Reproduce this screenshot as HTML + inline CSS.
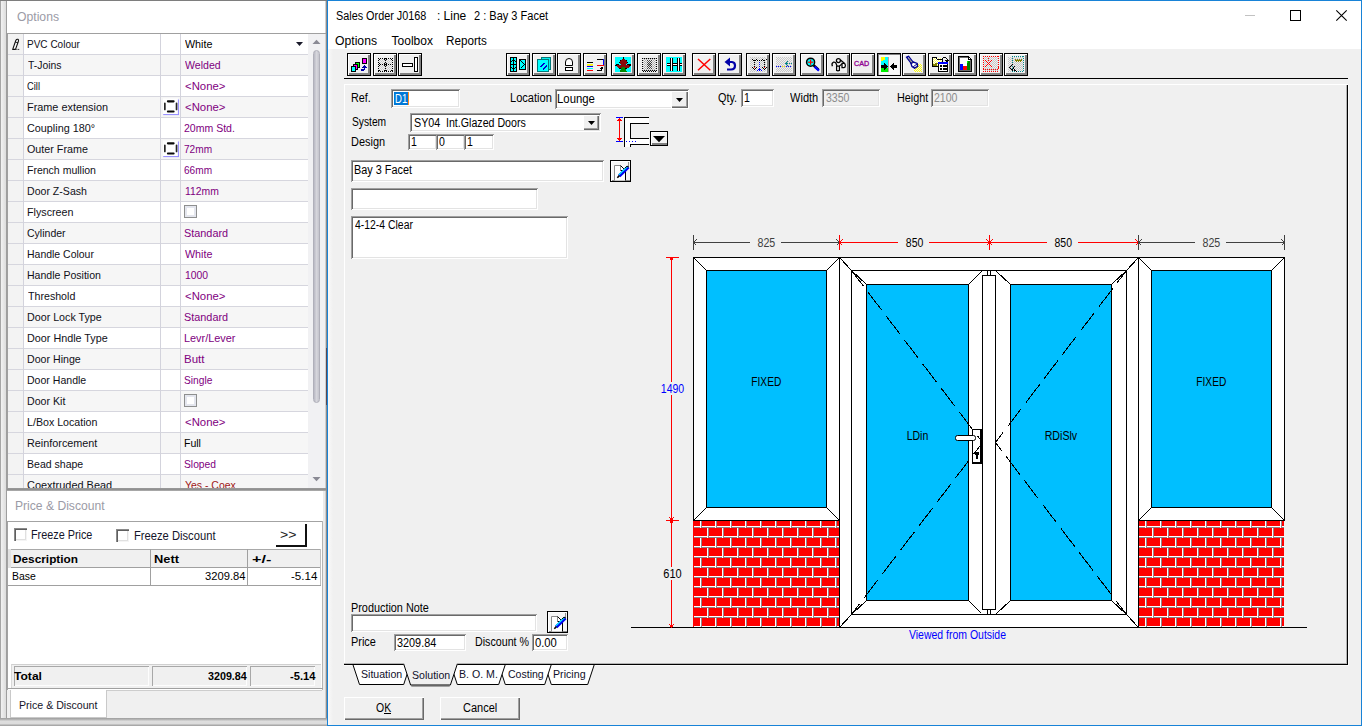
<!DOCTYPE html>
<html lang="en">
<head>
<meta charset="utf-8">
<title>Sales Order J0168 : Line 2 : Bay 3 Facet</title>
<style>
html,body{margin:0;padding:0;}
body{width:1362px;height:726px;position:relative;overflow:hidden;background:#f0f0f0;
 font-family:"Liberation Sans",Arial,sans-serif;}
.b{position:absolute;box-sizing:border-box;display:block;}
.t{position:absolute;white-space:nowrap;transform-origin:0 50%;display:block;}
svg{overflow:visible;}
.ce{shape-rendering:crispEdges;}
</style>
</head>
<body>
<!-- ===== left docked panels ===== -->
<div class="b" style="left:0px;top:0px;width:327px;height:726px;background:#fff;"></div>
<div class="b" style="left:0px;top:0px;width:7px;height:726px;background:linear-gradient(90deg,#a6a6a6 0,#a6a6a6 1px,#f2f2f2 1px,#dcdcdc 6px,#9e9e9e 6px);"></div>
<div class="b" style="left:0px;top:0px;width:327px;height:1px;background:#7e7e7e;"></div>
<div class="b" style="left:325px;top:1px;width:1px;height:725px;background:#cfcfcf;"></div>
<div class="b" style="left:326px;top:1px;width:1px;height:725px;background:#8c8c8c;"></div>
<span class="t" style="left:16.93px;top:8.00px;font-size:13px;line-height:18px;color:#9b9ba6;transform:scaleX(0.9378);">Options</span>
<div class="b" style="left:7px;top:33px;width:319px;height:1px;background:#a0a0a0;"></div>
<div class="b" style="left:7px;top:34px;width:318px;height:454px;overflow:hidden;background:#fff;">
<div class="b" style="left:1px;top:0px;width:300px;height:20px;background:#fff;"></div>
<div class="b" style="left:1px;top:0px;width:15px;height:20px;background:#f3f3f3;"></div>
<div class="b" style="left:1px;top:20px;width:300px;height:1px;background:#d6d6de;"></div>
<span class="t" style="left:19.98px;top:3.00px;font-size:11px;line-height:15px;color:#101018;transform:scaleX(0.9105);">PVC Colour</span>
<span class="t" style="left:177.96px;top:3.00px;font-size:11px;line-height:15px;color:#000;transform:scaleX(0.9751);">White</span>
<div class="b" style="left:1px;top:21px;width:300px;height:20px;background:#f6f6f6;"></div>
<div class="b" style="left:1px;top:21px;width:15px;height:20px;background:#f3f3f3;"></div>
<div class="b" style="left:1px;top:41px;width:300px;height:1px;background:#d6d6de;"></div>
<span class="t" style="left:20.57px;top:24.00px;font-size:11px;line-height:15px;color:#101018;transform:scaleX(0.9450);">T-Joins</span>
<span class="t" style="left:177.96px;top:24.00px;font-size:11px;line-height:15px;color:#800080;transform:scaleX(0.9603);">Welded</span>
<div class="b" style="left:1px;top:42px;width:300px;height:20px;background:#fff;"></div>
<div class="b" style="left:1px;top:42px;width:15px;height:20px;background:#f3f3f3;"></div>
<div class="b" style="left:1px;top:62px;width:300px;height:1px;background:#d6d6de;"></div>
<span class="t" style="left:20.33px;top:45.00px;font-size:11px;line-height:15px;color:#101018;transform:scaleX(0.8498);">Cill</span>
<span class="t" style="left:178.24px;top:45.00px;font-size:11px;line-height:15px;color:#800080;transform:scaleX(1.0346);">&lt;None&gt;</span>
<div class="b" style="left:1px;top:63px;width:300px;height:20px;background:#f6f6f6;"></div>
<div class="b" style="left:1px;top:63px;width:15px;height:20px;background:#f3f3f3;"></div>
<div class="b" style="left:1px;top:83px;width:300px;height:1px;background:#d6d6de;"></div>
<span class="t" style="left:19.91px;top:66.00px;font-size:11px;line-height:15px;color:#101018;transform:scaleX(0.9885);">Frame extension</span>
<span class="t" style="left:178.24px;top:66.00px;font-size:11px;line-height:15px;color:#800080;transform:scaleX(1.0346);">&lt;None&gt;</span>
<div class="b" style="left:1px;top:84px;width:300px;height:20px;background:#fff;"></div>
<div class="b" style="left:1px;top:84px;width:15px;height:20px;background:#f3f3f3;"></div>
<div class="b" style="left:1px;top:104px;width:300px;height:1px;background:#d6d6de;"></div>
<span class="t" style="left:20.26px;top:87.00px;font-size:11px;line-height:15px;color:#101018;transform:scaleX(0.9835);">Coupling 180°</span>
<span class="t" style="left:177.47px;top:87.00px;font-size:11px;line-height:15px;color:#800080;transform:scaleX(0.9567);">20mm Std.</span>
<div class="b" style="left:1px;top:105px;width:300px;height:20px;background:#f6f6f6;"></div>
<div class="b" style="left:1px;top:105px;width:15px;height:20px;background:#f3f3f3;"></div>
<div class="b" style="left:1px;top:125px;width:300px;height:1px;background:#d6d6de;"></div>
<span class="t" style="left:20.30px;top:108.00px;font-size:11px;line-height:15px;color:#101018;transform:scaleX(0.9764);">Outer Frame</span>
<span class="t" style="left:177.48px;top:108.00px;font-size:11px;line-height:15px;color:#800080;transform:scaleX(0.9187);">72mm</span>
<div class="b" style="left:1px;top:126px;width:300px;height:20px;background:#fff;"></div>
<div class="b" style="left:1px;top:126px;width:15px;height:20px;background:#f3f3f3;"></div>
<div class="b" style="left:1px;top:146px;width:300px;height:1px;background:#d6d6de;"></div>
<span class="t" style="left:19.94px;top:129.00px;font-size:11px;line-height:15px;color:#101018;transform:scaleX(0.9556);">French mullion</span>
<span class="t" style="left:177.49px;top:129.00px;font-size:11px;line-height:15px;color:#800080;transform:scaleX(0.9183);">66mm</span>
<div class="b" style="left:1px;top:147px;width:300px;height:20px;background:#f6f6f6;"></div>
<div class="b" style="left:1px;top:147px;width:15px;height:20px;background:#f3f3f3;"></div>
<div class="b" style="left:1px;top:167px;width:300px;height:1px;background:#d6d6de;"></div>
<span class="t" style="left:19.93px;top:150.00px;font-size:11px;line-height:15px;color:#101018;transform:scaleX(0.9614);">Door Z-Sash</span>
<span class="t" style="left:178.01px;top:150.00px;font-size:11px;line-height:15px;color:#800080;transform:scaleX(0.9444);">112mm</span>
<div class="b" style="left:1px;top:168px;width:300px;height:20px;background:#fff;"></div>
<div class="b" style="left:1px;top:168px;width:15px;height:20px;background:#f3f3f3;"></div>
<div class="b" style="left:1px;top:188px;width:300px;height:1px;background:#d6d6de;"></div>
<span class="t" style="left:19.92px;top:171.00px;font-size:11px;line-height:15px;color:#101018;transform:scaleX(0.9746);">Flyscreen</span>
<div class="b" style="left:177px;top:171px;width:13px;height:13px;background:#fff;border:1px solid #8e8f8f;box-shadow:inset 0 0 0 2px #e4e6ee;"></div>
<div class="b" style="left:1px;top:189px;width:300px;height:20px;background:#f6f6f6;"></div>
<div class="b" style="left:1px;top:189px;width:15px;height:20px;background:#f3f3f3;"></div>
<div class="b" style="left:1px;top:209px;width:300px;height:1px;background:#d6d6de;"></div>
<span class="t" style="left:20.27px;top:192.00px;font-size:11px;line-height:15px;color:#101018;transform:scaleX(0.9565);">Cylinder</span>
<span class="t" style="left:176.81px;top:192.00px;font-size:11px;line-height:15px;color:#800080;transform:scaleX(0.9876);">Standard</span>
<div class="b" style="left:1px;top:210px;width:300px;height:20px;background:#fff;"></div>
<div class="b" style="left:1px;top:210px;width:15px;height:20px;background:#f3f3f3;"></div>
<div class="b" style="left:1px;top:230px;width:300px;height:1px;background:#d6d6de;"></div>
<span class="t" style="left:19.94px;top:213.00px;font-size:11px;line-height:15px;color:#101018;transform:scaleX(0.9517);">Handle Colour</span>
<span class="t" style="left:177.96px;top:213.00px;font-size:11px;line-height:15px;color:#800080;transform:scaleX(0.9751);">White</span>
<div class="b" style="left:1px;top:231px;width:300px;height:20px;background:#f6f6f6;"></div>
<div class="b" style="left:1px;top:231px;width:15px;height:20px;background:#f3f3f3;"></div>
<div class="b" style="left:1px;top:251px;width:300px;height:1px;background:#d6d6de;"></div>
<span class="t" style="left:19.93px;top:234.00px;font-size:11px;line-height:15px;color:#101018;transform:scaleX(0.9597);">Handle Position</span>
<span class="t" style="left:178.01px;top:234.00px;font-size:11px;line-height:15px;color:#800080;transform:scaleX(0.9436);">1000</span>
<div class="b" style="left:1px;top:252px;width:300px;height:20px;background:#fff;"></div>
<div class="b" style="left:1px;top:252px;width:15px;height:20px;background:#f3f3f3;"></div>
<div class="b" style="left:1px;top:272px;width:300px;height:1px;background:#d6d6de;"></div>
<span class="t" style="left:20.57px;top:255.00px;font-size:11px;line-height:15px;color:#101018;transform:scaleX(0.9673);">Threshold</span>
<span class="t" style="left:178.24px;top:255.00px;font-size:11px;line-height:15px;color:#800080;transform:scaleX(1.0346);">&lt;None&gt;</span>
<div class="b" style="left:1px;top:273px;width:300px;height:20px;background:#f6f6f6;"></div>
<div class="b" style="left:1px;top:273px;width:15px;height:20px;background:#f3f3f3;"></div>
<div class="b" style="left:1px;top:293px;width:300px;height:1px;background:#d6d6de;"></div>
<span class="t" style="left:19.92px;top:276.00px;font-size:11px;line-height:15px;color:#101018;transform:scaleX(0.9728);">Door Lock Type</span>
<span class="t" style="left:176.81px;top:276.00px;font-size:11px;line-height:15px;color:#800080;transform:scaleX(0.9876);">Standard</span>
<div class="b" style="left:1px;top:294px;width:300px;height:20px;background:#fff;"></div>
<div class="b" style="left:1px;top:294px;width:15px;height:20px;background:#f3f3f3;"></div>
<div class="b" style="left:1px;top:314px;width:300px;height:1px;background:#d6d6de;"></div>
<span class="t" style="left:19.92px;top:297.00px;font-size:11px;line-height:15px;color:#101018;transform:scaleX(0.9807);">Door Hndle Type</span>
<span class="t" style="left:177.11px;top:297.00px;font-size:11px;line-height:15px;color:#800080;transform:scaleX(0.9902);">Levr/Lever</span>
<div class="b" style="left:1px;top:315px;width:300px;height:20px;background:#f6f6f6;"></div>
<div class="b" style="left:1px;top:315px;width:15px;height:20px;background:#f3f3f3;"></div>
<div class="b" style="left:1px;top:335px;width:300px;height:1px;background:#d6d6de;"></div>
<span class="t" style="left:19.93px;top:318.00px;font-size:11px;line-height:15px;color:#101018;transform:scaleX(0.9659);">Door Hinge</span>
<span class="t" style="left:177.06px;top:318.00px;font-size:11px;line-height:15px;color:#800080;transform:scaleX(1.0436);">Butt</span>
<div class="b" style="left:1px;top:336px;width:300px;height:20px;background:#fff;"></div>
<div class="b" style="left:1px;top:336px;width:15px;height:20px;background:#f3f3f3;"></div>
<div class="b" style="left:1px;top:356px;width:300px;height:1px;background:#d6d6de;"></div>
<span class="t" style="left:19.93px;top:339.00px;font-size:11px;line-height:15px;color:#101018;transform:scaleX(0.9591);">Door Handle</span>
<span class="t" style="left:176.84px;top:339.00px;font-size:11px;line-height:15px;color:#800080;transform:scaleX(0.9256);">Single</span>
<div class="b" style="left:1px;top:357px;width:300px;height:20px;background:#f6f6f6;"></div>
<div class="b" style="left:1px;top:357px;width:15px;height:20px;background:#f3f3f3;"></div>
<div class="b" style="left:1px;top:377px;width:300px;height:1px;background:#d6d6de;"></div>
<span class="t" style="left:19.93px;top:360.00px;font-size:11px;line-height:15px;color:#101018;transform:scaleX(0.9648);">Door Kit</span>
<div class="b" style="left:177px;top:360px;width:13px;height:13px;background:#fff;border:1px solid #8e8f8f;box-shadow:inset 0 0 0 2px #e4e6ee;"></div>
<div class="b" style="left:1px;top:378px;width:300px;height:20px;background:#fff;"></div>
<div class="b" style="left:1px;top:378px;width:15px;height:20px;background:#f3f3f3;"></div>
<div class="b" style="left:1px;top:398px;width:300px;height:1px;background:#d6d6de;"></div>
<span class="t" style="left:19.93px;top:381.00px;font-size:11px;line-height:15px;color:#101018;transform:scaleX(0.9681);">L/Box Location</span>
<span class="t" style="left:178.24px;top:381.00px;font-size:11px;line-height:15px;color:#800080;transform:scaleX(1.0346);">&lt;None&gt;</span>
<div class="b" style="left:1px;top:399px;width:300px;height:20px;background:#f6f6f6;"></div>
<div class="b" style="left:1px;top:399px;width:15px;height:20px;background:#f3f3f3;"></div>
<div class="b" style="left:1px;top:419px;width:300px;height:1px;background:#d6d6de;"></div>
<span class="t" style="left:19.91px;top:402.00px;font-size:11px;line-height:15px;color:#101018;transform:scaleX(0.9836);">Reinforcement</span>
<span class="t" style="left:177.14px;top:402.00px;font-size:11px;line-height:15px;color:#000;transform:scaleX(0.9569);">Full</span>
<div class="b" style="left:1px;top:420px;width:300px;height:20px;background:#fff;"></div>
<div class="b" style="left:1px;top:420px;width:15px;height:20px;background:#f3f3f3;"></div>
<div class="b" style="left:1px;top:440px;width:300px;height:1px;background:#d6d6de;"></div>
<span class="t" style="left:19.94px;top:423.00px;font-size:11px;line-height:15px;color:#101018;transform:scaleX(0.9576);">Bead shape</span>
<span class="t" style="left:176.84px;top:423.00px;font-size:11px;line-height:15px;color:#800080;transform:scaleX(0.9348);">Sloped</span>
<div class="b" style="left:1px;top:441px;width:300px;height:20px;background:#f6f6f6;"></div>
<div class="b" style="left:1px;top:441px;width:15px;height:20px;background:#f3f3f3;"></div>
<div class="b" style="left:1px;top:461px;width:300px;height:1px;background:#d6d6de;"></div>
<span class="t" style="left:20.25px;top:444.00px;font-size:11px;line-height:15px;color:#101018;transform:scaleX(0.9946);">Coextruded Bead</span>
<span class="t" style="left:177.77px;top:444.00px;font-size:11px;line-height:15px;color:#a01818;transform:scaleX(0.9500);">Yes - Coex</span>
<div class="b" style="left:0px;top:0px;width:1px;height:454px;background:#d3d3dc;"></div>
<div class="b" style="left:16px;top:0px;width:1px;height:454px;background:#d3d3dc;"></div>
<div class="b" style="left:153px;top:0px;width:1px;height:454px;background:#d3d3dc;"></div>
<div class="b" style="left:173px;top:0px;width:1px;height:454px;background:#d3d3dc;"></div>
<div class="b" style="left:0px;top:0px;width:1px;height:454px;background:#a0a0a0;"></div>
<svg class="b" style="left:4px;top:3px;" width="10" height="14" viewBox="0 0 10 14" ><path d="M1.7 12.4 L4.9 3.3 Q5.6 1.9 6.9 2.3 Q7.9 2.9 7.4 4.2 L4.5 12.4 Z" fill="#fff" stroke="#111" stroke-width="1.1" stroke-linejoin="round"/><path d="M4.3 5.2 L7 5.7" fill="none" stroke="#111" stroke-width=".9"/><rect x="5.4" y="11.9" width="1" height="1" fill="#111"/><rect x="7.2" y="11.9" width="1" height="1" fill="#111"/></svg>
<svg class="b" style="left:156px;top:64px;" width="17" height="18" viewBox="0 0 17 18" ><rect x="0" y="0.5" width="15" height="16" fill="#fff"/><path d="M15.4 1.5 V16.7 M0.2 16.6 H16" stroke="#8f86ff" stroke-width="1" fill="none"/><path d="M4.9 3.35 H10.6 M4.9 13.55 H10.6" stroke="#0a0a0a" stroke-width="2.1" stroke-linecap="round" fill="none"/><path d="M1.85 5.3 V11.4 M13.55 5.3 V11.4" stroke="#262626" stroke-width="1.7" stroke-linecap="round" fill="none"/></svg>
<svg class="b" style="left:156px;top:106px;" width="17" height="18" viewBox="0 0 17 18" ><rect x="0" y="0.5" width="15" height="16" fill="#fff"/><path d="M15.4 1.5 V16.7 M0.2 16.6 H16" stroke="#8f86ff" stroke-width="1" fill="none"/><path d="M4.9 3.35 H10.6 M4.9 13.55 H10.6" stroke="#0a0a0a" stroke-width="2.1" stroke-linecap="round" fill="none"/><path d="M1.85 5.3 V11.4 M13.55 5.3 V11.4" stroke="#262626" stroke-width="1.7" stroke-linecap="round" fill="none"/></svg>
<svg class="b" style="left:289px;top:8px;" width="8" height="5" viewBox="0 0 8 5" ><path d="M0 0 H7 L3.5 4 Z" fill="#1a1a2a"/></svg>
<div class="b" style="left:301px;top:0px;width:17px;height:454px;background:#f1f1f3;"></div>
<svg class="b" style="left:305px;top:5px;" width="9" height="6" viewBox="0 0 9 6" ><path d="M0.5 5 L4.5 0.8 L8.5 5 Z" fill="#8a8a94"/></svg>
<svg class="b" style="left:305px;top:442px;" width="9" height="6" viewBox="0 0 9 6" ><path d="M0.5 1 L8.5 1 L4.5 5.2 Z" fill="#8a8a94"/></svg>
<div class="b" style="left:306px;top:16px;width:7px;height:353px;background:linear-gradient(90deg,#b9b9c3,#d6d6dc 50%,#c4c4cc);border-radius:3.5px;border:1px solid #b0b0ba;"></div>
</div>
<div class="b" style="left:7px;top:488px;width:319px;height:3px;background:linear-gradient(#9a9a9a,#8f8f8f 60%,#b8b8b8);"></div>
<span class="t" style="left:14.51px;top:497.00px;font-size:13px;line-height:18px;color:#9b9ba6;transform:scaleX(0.9322);">Price &amp; Discount</span>
<div class="b" style="left:7px;top:521px;width:316px;height:1px;background:#a3a3a3;"></div>
<div class="b" style="left:7px;top:521px;width:1px;height:170px;background:#a3a3a3;"></div>
<div class="b" style="left:322px;top:521px;width:1px;height:170px;background:#b4b4b4;"></div>
<div class="b" style="left:323px;top:491px;width:2px;height:200px;background:#ececec;"></div>
<div class="b" style="left:7px;top:690px;width:316px;height:1px;background:#b0b0b0;"></div>
<div class="b" style="left:14px;top:528px;width:13px;height:13px;background:#fff;box-shadow:inset 1px 1px 0 #8a8a8a,inset 2px 2px 0 #5f5f5f,inset -1px -1px 0 #f4f4f4,inset -2px -2px 0 #e0e0e0;"></div>
<div class="b" style="left:116px;top:529px;width:13px;height:13px;background:#fff;box-shadow:inset 1px 1px 0 #8a8a8a,inset 2px 2px 0 #5f5f5f,inset -1px -1px 0 #f4f4f4,inset -2px -2px 0 #e0e0e0;"></div>
<span class="t" style="left:31.11px;top:527.00px;font-size:12px;line-height:17px;color:#15152a;transform:scaleX(0.9022);">Freeze Price</span>
<span class="t" style="left:133.58px;top:528.00px;font-size:12px;line-height:17px;color:#15152a;transform:scaleX(0.9327);">Freeze Discount</span>
<div class="b" style="left:276px;top:524px;width:31px;height:23px;background:#fff;border-right:2px solid #111;border-bottom:2px solid #111;"></div>
<span class="t" style="left:279.81px;top:527.00px;font-size:12px;line-height:17px;color:#222;transform:scaleX(1.1671);">&gt;&gt;</span>
<div class="b" style="left:8px;top:549px;width:313px;height:19px;background:#f0f0f0;border-top:1px solid #a8a8a8;border-bottom:1px solid #a0a0a0;"></div>
<div class="b" style="left:8px;top:549px;width:3px;height:19px;background:#e2e2e2;"></div>
<div class="b" style="left:150px;top:549px;width:1px;height:37px;background:#a0a0a0;"></div>
<div class="b" style="left:247px;top:549px;width:1px;height:37px;background:#a0a0a0;"></div>
<div class="b" style="left:320px;top:549px;width:1px;height:37px;background:#c0c0c0;"></div>
<span class="t" style="left:13.22px;top:552.00px;font-size:11px;line-height:15px;color:#000;font-weight:bold;transform:scaleX(1.0744);">Description</span>
<span class="t" style="left:154.15px;top:552.00px;font-size:11px;line-height:15px;color:#000;font-weight:bold;transform:scaleX(1.1692);">Nett</span>
<span class="t" style="left:252.32px;top:552.00px;font-size:11px;line-height:15px;color:#000;font-weight:bold;transform:scaleX(1.4702);">+/-</span>
<div class="b" style="left:8px;top:585px;width:313px;height:1px;background:#a0a0a0;"></div>
<span class="t" style="left:11.64px;top:569.00px;font-size:11px;line-height:15px;color:#000;transform:scaleX(0.9500);">Base</span>
<span class="t" style="left:205.07px;top:569.00px;font-size:11px;line-height:15px;color:#000;transform:scaleX(1.0172);">3209.84</span>
<span class="t" style="left:290.89px;top:569.00px;font-size:11px;line-height:15px;color:#000;transform:scaleX(1.0550);">-5.14</span>
<div class="b" style="left:11px;top:664px;width:310px;height:25px;background:#f0f0f0;border-top:1px solid #d0d0d0;border-left:1px solid #d8d8d8;"></div>
<div class="b" style="left:14px;top:666px;width:135px;height:20px;background:#f0f0f0;box-shadow:inset 1px 1px 0 #a8a8a8,inset -1px -1px 0 #fdfdfd;"></div>
<div class="b" style="left:152px;top:666px;width:95px;height:20px;background:#f0f0f0;box-shadow:inset 1px 1px 0 #a8a8a8,inset -1px -1px 0 #fdfdfd;"></div>
<div class="b" style="left:250px;top:666px;width:65px;height:20px;background:#f0f0f0;box-shadow:inset 1px 1px 0 #a8a8a8,inset -1px -1px 0 #fdfdfd;"></div>
<span class="t" style="left:13.87px;top:669.00px;font-size:11px;line-height:15px;color:#000;font-weight:bold;transform:scaleX(1.0987);">Total</span>
<span class="t" style="left:207.76px;top:669.00px;font-size:11px;line-height:15px;color:#000;font-weight:bold;transform:scaleX(0.9755);">3209.84</span>
<span class="t" style="left:289.56px;top:669.00px;font-size:11px;line-height:15px;color:#000;font-weight:bold;transform:scaleX(1.0169);">-5.14</span>
<div class="b" style="left:7px;top:688px;width:316px;height:1px;background:#a0a0a0;"></div>
<div class="b" style="left:7px;top:690px;width:318px;height:28px;background:#f0f0f0;"></div>
<div class="b" style="left:107px;top:690px;width:215px;height:1px;background:#cdcdcd;"></div>
<div class="b" style="left:10px;top:690px;width:97px;height:28px;background:#fff;border:1px solid #c9c9c9;border-top:none;"></div>
<span class="t" style="left:18.63px;top:698.00px;font-size:11px;line-height:15px;color:#15152a;transform:scaleX(0.9647);">Price &amp; Discount</span>
<div class="b" style="left:0px;top:718px;width:327px;height:8px;background:linear-gradient(#9c9c9c 0,#bdbdbd 2px,#dedede 3px,#dcdcdc 6px,#a8a8a8 7px);"></div>
<!-- ===== main window ===== -->
<div class="b" style="left:327px;top:0px;width:1035px;height:726px;background:#f0f0f0;border:1px solid #1883d7;"></div>
<div class="b" style="left:328px;top:49px;width:5px;height:676px;background:linear-gradient(90deg,#f9f9f9,#f0f0f0);"></div>
<div class="b" style="left:326px;top:348px;width:1px;height:57px;background:#5c4a52;"></div>
<div class="b" style="left:328px;top:1px;width:1033px;height:48px;background:#fff;"></div>
<span class="t" style="left:335.81px;top:8.00px;font-size:12px;line-height:17px;color:#000;transform:scaleX(0.9030);">Sales Order J0168</span>
<span class="t" style="left:436.91px;top:8.00px;font-size:12px;line-height:17px;color:#000;">: Line</span>
<span class="t" style="left:474.45px;top:8.00px;font-size:12px;line-height:17px;color:#000;transform:scaleX(0.9184);">2 : Bay 3 Facet</span>
<span class="t" style="left:335.13px;top:33.00px;font-size:12px;line-height:17px;color:#000;transform:scaleX(1.0160);">Options</span>
<span class="t" style="left:391.54px;top:33.00px;font-size:12px;line-height:17px;color:#000;">Toolbox</span>
<span class="t" style="left:446.34px;top:33.00px;font-size:12px;line-height:17px;color:#000;transform:scaleX(0.9730);">Reports</span>
<div class="b" style="left:1245px;top:15px;width:10px;height:1px;background:#c2c2c2;"></div>
<div class="b" style="left:1290px;top:10px;width:11px;height:11px;border:1px solid #000;"></div>
<svg class="b" style="left:1336px;top:10px;" width="11" height="11" viewBox="0 0 11 11" ><path d="M0.3 0.3 L10.7 10.7 M10.7 0.3 L0.3 10.7" stroke="#000" stroke-width="1.1" fill="none"/></svg>
<div class="b" style="left:344px;top:78px;width:1004px;height:1px;background:#000;"></div>
<div class="b" style="left:344px;top:84px;width:1004px;height:1px;background:#fff;"></div>
<div class="b" style="left:344px;top:84px;width:1px;height:581px;background:#fff;"></div>
<div class="b" style="left:1346px;top:85px;width:1px;height:579px;background:#b4b4b4;"></div>
<div class="b" style="left:1347px;top:85px;width:1px;height:580px;background:#000;"></div>
<div class="b" style="left:1348px;top:85px;width:1px;height:581px;background:#fafafa;"></div>
<div class="b" style="left:344px;top:663px;width:1003px;height:1px;background:#b4b4b4;"></div>
<div class="b" style="left:344px;top:665px;width:1005px;height:1px;background:#fafafa;"></div>
<span class="t" style="left:351.11px;top:89.00px;font-size:12.5px;line-height:18px;color:#000;transform:scaleX(0.8669);">Ref.</span>
<div class="b" style="left:391px;top:89px;width:69px;height:19px;background:#fff;box-shadow:inset 1px 1px 0 #a0a0a0,inset -1px -1px 0 #fff,inset 2px 2px 0 #696969,inset -2px -2px 0 #e3e3e3;"></div>
<div class="b" style="left:394px;top:92px;width:14px;height:13px;background:#0078d7;"></div>
<div class="b" style="left:408px;top:92px;width:1px;height:13px;background:#ff8a1e;"></div>
<span class="t" style="left:394.61px;top:90.00px;font-size:12.5px;line-height:18px;color:#fff;transform:scaleX(0.7666);">D1</span>
<span class="t" style="left:510.09px;top:89.00px;font-size:12.5px;line-height:18px;color:#000;transform:scaleX(0.8869);">Location</span>
<div class="b" style="left:555px;top:89px;width:134px;height:20px;background:#fff;box-shadow:inset 1px 1px 0 #a0a0a0,inset -1px -1px 0 #fff,inset 2px 2px 0 #696969,inset -2px -2px 0 #e3e3e3;"></div>
<span class="t" style="left:557.37px;top:90.00px;font-size:12.5px;line-height:18px;color:#000;transform:scaleX(0.9094);">Lounge</span>
<div class="b" style="left:671px;top:91px;width:17px;height:17px;background:#f0f0f0;box-shadow:inset 1px 1px 0 #fff,inset -1px -1px 0 #696969,inset -2px -2px 0 #a0a0a0;"></div>
<svg class="b" style="left:676px;top:98px;" width="7" height="4" viewBox="0 0 7 4" ><path d="M0 0 H7 L3.5 4 Z" fill="#000"/></svg>
<span class="t" style="left:718.19px;top:89.00px;font-size:12.5px;line-height:18px;color:#000;transform:scaleX(0.8686);">Qty.</span>
<div class="b" style="left:741px;top:89px;width:33px;height:18px;background:#fff;box-shadow:inset 1px 1px 0 #a0a0a0,inset -1px -1px 0 #fff,inset 2px 2px 0 #696969,inset -2px -2px 0 #e3e3e3;"></div>
<span class="t" style="left:744.20px;top:89.00px;font-size:12.5px;line-height:18px;color:#000;transform:scaleX(0.8450);">1</span>
<span class="t" style="left:790.26px;top:89.00px;font-size:12.5px;line-height:18px;color:#000;transform:scaleX(0.8842);">Width</span>
<div class="b" style="left:822px;top:89px;width:58px;height:18px;background:#f0f0f0;box-shadow:inset 1px 1px 0 #a0a0a0,inset -1px -1px 0 #fff,inset 2px 2px 0 #696969,inset -2px -2px 0 #e3e3e3;"></div>
<span class="t" style="left:825.60px;top:89.00px;font-size:12.5px;line-height:18px;color:#8c8c8c;transform:scaleX(0.8450);">3350</span>
<span class="t" style="left:896.71px;top:89.00px;font-size:12.5px;line-height:18px;color:#000;transform:scaleX(0.8680);">Height</span>
<div class="b" style="left:931px;top:89px;width:58px;height:18px;background:#f0f0f0;box-shadow:inset 1px 1px 0 #a0a0a0,inset -1px -1px 0 #fff,inset 2px 2px 0 #696969,inset -2px -2px 0 #e3e3e3;"></div>
<span class="t" style="left:934.47px;top:89.00px;font-size:12.5px;line-height:18px;color:#8c8c8c;transform:scaleX(0.8450);">2100</span>
<span class="t" style="left:351.54px;top:113.00px;font-size:12.5px;line-height:18px;color:#000;transform:scaleX(0.8189);">System</span>
<div class="b" style="left:410px;top:113px;width:191px;height:19px;background:#fff;box-shadow:inset 1px 1px 0 #a0a0a0,inset -1px -1px 0 #fff,inset 2px 2px 0 #696969,inset -2px -2px 0 #e3e3e3;"></div>
<span class="t" style="left:414.02px;top:114.00px;font-size:12.5px;line-height:18px;color:#000;transform:scaleX(0.8600);">SY04</span>
<span class="t" style="left:445.82px;top:114.00px;font-size:12.5px;line-height:18px;color:#000;transform:scaleX(0.8504);">Int.Glazed Doors</span>
<div class="b" style="left:583px;top:115px;width:16px;height:15px;background:#f0f0f0;box-shadow:inset 1px 1px 0 #fff,inset -1px -1px 0 #696969,inset -2px -2px 0 #a0a0a0;"></div>
<svg class="b" style="left:588px;top:121px;" width="7" height="4" viewBox="0 0 7 4" ><path d="M0 0 H7 L3.5 4 Z" fill="#000"/></svg>
<span class="t" style="left:351.10px;top:133.00px;font-size:12.5px;line-height:18px;color:#000;transform:scaleX(0.8763);">Design</span>
<div class="b" style="left:408px;top:134px;width:29px;height:16px;background:#fff;box-shadow:inset 1px 1px 0 #a0a0a0,inset -1px -1px 0 #fff,inset 2px 2px 0 #696969,inset -2px -2px 0 #e3e3e3;"></div>
<span class="t" style="left:410.90px;top:133.00px;font-size:12.5px;line-height:18px;color:#000;transform:scaleX(0.8450);">1</span>
<div class="b" style="left:436px;top:134px;width:29px;height:16px;background:#fff;box-shadow:inset 1px 1px 0 #a0a0a0,inset -1px -1px 0 #fff,inset 2px 2px 0 #696969,inset -2px -2px 0 #e3e3e3;"></div>
<span class="t" style="left:439.29px;top:133.00px;font-size:12.5px;line-height:18px;color:#000;transform:scaleX(0.8450);">0</span>
<div class="b" style="left:464px;top:134px;width:30px;height:16px;background:#fff;box-shadow:inset 1px 1px 0 #a0a0a0,inset -1px -1px 0 #fff,inset 2px 2px 0 #696969,inset -2px -2px 0 #e3e3e3;"></div>
<span class="t" style="left:466.90px;top:133.00px;font-size:12.5px;line-height:18px;color:#000;transform:scaleX(0.8450);">1</span>
<svg class="b" style="left:615px;top:116px;" width="55" height="33" viewBox="0 0 55 33" ><g class="ce"><rect x="10" y="2" width="24" height="29" fill="#fff"/><rect x="16" y="8" width="18" height="14" fill="#f0f0f0"/><rect x="16" y="29" width="18" height="2" fill="#f0f0f0"/><rect x="1" y="1" width="7" height="1" fill="#00f"/><rect x="1" y="25" width="7" height="1" fill="#00f"/><rect x="4" y="2" width="1" height="23" fill="#f00"/><rect x="3" y="3" width="3" height="1" fill="#f00"/><rect x="2" y="4" width="5" height="1" fill="#f00"/><rect x="3" y="23" width="3" height="1" fill="#f00"/><rect x="2" y="22" width="5" height="1" fill="#f00"/><rect x="9" y="1" width="1" height="30" fill="#000"/><rect x="9" y="1" width="25" height="1" fill="#000"/><rect x="15" y="7" width="1" height="16" fill="#000"/><rect x="15" y="7" width="19" height="1" fill="#000"/><rect x="15" y="22" width="19" height="1" fill="#000"/><rect x="15" y="28" width="19" height="1" fill="#000"/><rect x="15" y="28" width="1" height="3" fill="#000"/><rect x="11" y="25" width="1" height="1" fill="#00f"/><rect x="14" y="25" width="1" height="1" fill="#00f"/><rect x="17" y="25" width="1" height="1" fill="#00f"/><rect x="20" y="25" width="1" height="1" fill="#00f"/></g></svg>
<div class="b" style="left:650px;top:131px;width:18px;height:15px;background:#f4f4f4;border:1px solid #000;box-shadow:inset 1px 1px 0 #fff,inset 0 -2px 0 #808080;"></div>
<svg class="b" style="left:653px;top:136px;" width="12" height="7" viewBox="0 0 12 7" ><path d="M0 0 H12 L6 6.2 Z" fill="#000"/></svg>
<div class="b" style="left:351px;top:160px;width:253px;height:22px;background:#fff;box-shadow:inset 1px 1px 0 #a0a0a0,inset -1px -1px 0 #fff,inset 2px 2px 0 #696969,inset -2px -2px 0 #e3e3e3;"></div>
<span class="t" style="left:353.81px;top:161.00px;font-size:12.5px;line-height:18px;color:#000;transform:scaleX(0.8691);">Bay 3 Facet</span>
<div class="b" style="left:351px;top:188px;width:187px;height:22px;background:#fff;box-shadow:inset 1px 1px 0 #a0a0a0,inset -1px -1px 0 #fff,inset 2px 2px 0 #696969,inset -2px -2px 0 #e3e3e3;"></div>
<div class="b" style="left:351px;top:216px;width:217px;height:43px;background:#fff;box-shadow:inset 1px 1px 0 #a0a0a0,inset -1px -1px 0 #fff,inset 2px 2px 0 #696969,inset -2px -2px 0 #e3e3e3;"></div>
<span class="t" style="left:355.27px;top:216.00px;font-size:12.5px;line-height:18px;color:#000;transform:scaleX(0.8333);">4-12-4 Clear</span>
<div class="b" style="left:610px;top:160px;width:21px;height:22px;background:#f6f6f6;border:1px solid #000;box-shadow:inset 1px 1px 0 #fff,inset 0 -1px 0 #8a8a8a;"></div>
<svg class="b" style="left:610px;top:160px;" width="21" height="22" viewBox="0 0 21 22" ><path d="M4.5 20.5 V5.5 H10.5 L15.5 10.5 V20.5 Z" fill="#fff" stroke="none"/><path d="M4.5 20.5 V5.5 H10.5 V10.2" fill="none" stroke="#8a8a8a" stroke-width="1"/><path d="M10.5 5.5 L15.5 10.5 V20.5 M10.5 10.5 H15.5" fill="none" stroke="#000" stroke-width="1"/><path d="M18.5 2 V6" stroke="#909090" stroke-width="1" fill="none"/><path d="M9.2 16 L18.3 7" stroke="#0000f0" stroke-width="3.2" fill="none"/><path d="M8.9 14.9 L17.4 6.5" stroke="#00f0ff" stroke-width="1.3" fill="none"/><path d="M7.3 17.7 L9.4 15.6" stroke="#000" stroke-width="1.6" fill="none"/><path d="M14.8 8.2 L17 6.2 L19 7" stroke="#000" stroke-width="1" fill="none"/></svg>
<div class="b" style="left:547px;top:611px;width:21px;height:22px;background:#f6f6f6;border:1px solid #000;box-shadow:inset 1px 1px 0 #fff,inset 0 -1px 0 #8a8a8a;"></div>
<svg class="b" style="left:547px;top:611px;" width="21" height="22" viewBox="0 0 21 22" ><path d="M4.5 20.5 V5.5 H10.5 L15.5 10.5 V20.5 Z" fill="#fff" stroke="none"/><path d="M4.5 20.5 V5.5 H10.5 V10.2" fill="none" stroke="#8a8a8a" stroke-width="1"/><path d="M10.5 5.5 L15.5 10.5 V20.5 M10.5 10.5 H15.5" fill="none" stroke="#000" stroke-width="1"/><path d="M18.5 2 V6" stroke="#909090" stroke-width="1" fill="none"/><path d="M9.2 16 L18.3 7" stroke="#0000f0" stroke-width="3.2" fill="none"/><path d="M8.9 14.9 L17.4 6.5" stroke="#00f0ff" stroke-width="1.3" fill="none"/><path d="M7.3 17.7 L9.4 15.6" stroke="#000" stroke-width="1.6" fill="none"/><path d="M14.8 8.2 L17 6.2 L19 7" stroke="#000" stroke-width="1" fill="none"/></svg>
<span class="t" style="left:350.61px;top:599.00px;font-size:12.5px;line-height:18px;color:#000;transform:scaleX(0.8687);">Production Note</span>
<div class="b" style="left:351px;top:614px;width:186px;height:18px;background:#fff;box-shadow:inset 1px 1px 0 #a0a0a0,inset -1px -1px 0 #fff,inset 2px 2px 0 #696969,inset -2px -2px 0 #e3e3e3;"></div>
<span class="t" style="left:350.60px;top:633.00px;font-size:12.5px;line-height:18px;color:#000;transform:scaleX(0.8736);">Price</span>
<div class="b" style="left:394px;top:634px;width:72px;height:17px;background:#fff;box-shadow:inset 1px 1px 0 #a0a0a0,inset -1px -1px 0 #fff,inset 2px 2px 0 #696969,inset -2px -2px 0 #e3e3e3;"></div>
<span class="t" style="left:396.89px;top:634.00px;font-size:12.5px;line-height:18px;color:#000;transform:scaleX(0.8681);">3209.84</span>
<span class="t" style="left:474.62px;top:633.00px;font-size:12.5px;line-height:18px;color:#000;transform:scaleX(0.8551);">Discount %</span>
<div class="b" style="left:532px;top:634px;width:36px;height:17px;background:#fff;box-shadow:inset 1px 1px 0 #a0a0a0,inset -1px -1px 0 #fff,inset 2px 2px 0 #696969,inset -2px -2px 0 #e3e3e3;"></div>
<span class="t" style="left:535.06px;top:634.00px;font-size:12.5px;line-height:18px;color:#000;transform:scaleX(0.8989);">0.00</span>
<svg class="b" style="left:0;top:0;" width="1362" height="726" viewBox="0 0 1362 726"><path d="M544.7 664.5 L551.3 684.5 L587.7 684.5 L594.3 664.5" fill="#fff" stroke="#000" stroke-width="1"/><path d="M498.7 664.5 L505.3 684.5 L544.7 684.5 L551.3 664.5" fill="#fff" stroke="#000" stroke-width="1"/><path d="M450.7 664.5 L457.3 684.5 L498.7 684.5 L505.3 664.5" fill="#fff" stroke="#000" stroke-width="1"/><path d="M352.9 664.5 L359.5 684.5 L403.7 684.5 L410.3 664.5" fill="#fff" stroke="#000" stroke-width="1"/><path d="M344 664.5 H403.7 M457.3 664.5 H1348" stroke="#000" stroke-width="1" fill="none"/><rect x="404.2" y="662.5" width="52.6" height="3" fill="#f0f0f0"/><path d="M403.7 664 L410.6 685 L450.4 685 L457.3 664" fill="#f0f0f0" stroke="#000" stroke-width="1"/><path d="M411.3 686 L449.7 686" stroke="#555" stroke-width="1"/></svg>
<span class="t" style="left:360.82px;top:667.00px;font-size:11px;line-height:15px;color:#10102a;transform:scaleX(0.9615);">Situation</span>
<span class="t" style="left:411.82px;top:668.00px;font-size:11px;line-height:15px;color:#10102a;transform:scaleX(0.9597);">Solution</span>
<span class="t" style="left:459.43px;top:667.00px;font-size:11px;line-height:15px;color:#10102a;transform:scaleX(0.9627);">B. O. M.</span>
<span class="t" style="left:507.97px;top:667.00px;font-size:11px;line-height:15px;color:#10102a;transform:scaleX(0.9574);">Costing</span>
<span class="t" style="left:553.13px;top:667.00px;font-size:11px;line-height:15px;color:#10102a;transform:scaleX(0.9681);">Pricing</span>
<div class="b" style="left:344px;top:697px;width:80px;height:23px;background:#f0f0f0;box-shadow:inset 1px 1px 0 #fff,inset -1px -1px 0 #696969,inset -2px -2px 0 #a0a0a0;"></div>
<span class="t" style="left:376.11px;top:699.00px;font-size:12.5px;line-height:18px;color:#000;transform:scaleX(0.8363);">OK</span>
<div class="b" style="left:384px;top:713px;width:7px;height:1px;background:#000;"></div>
<div class="b" style="left:440px;top:697px;width:80px;height:23px;background:#f0f0f0;box-shadow:inset 1px 1px 0 #fff,inset -1px -1px 0 #696969,inset -2px -2px 0 #a0a0a0;"></div>
<span class="t" style="left:463.05px;top:699.00px;font-size:12.5px;line-height:18px;color:#000;transform:scaleX(0.8809);">Cancel</span>
<!-- ===== toolbar ===== -->
<div class="b" style="left:347px;top:53px;width:24px;height:23px;background:#f0f0f0;border:1px solid #000;box-shadow:inset 1px 1px 0 #fff,inset -1px -1px 0 #808080,inset -2px -2px 0 #808080;"></div>
<svg class="b" style="left:347px;top:53px;" width="24" height="23" viewBox="0 0 24 23" ><g class="ce"><rect x="15.5" y="5.5" width="4" height="5" fill="#f0f" stroke="#000" stroke-width="1"/><rect x="8.5" y="9.5" width="4" height="5" fill="#0f0" stroke="#000" stroke-width="1"/><rect x="6.5" y="11.5" width="4" height="5" fill="#f0f" stroke="#000" stroke-width="1"/><rect x="4.5" y="13.5" width="4" height="5" fill="#0ff" stroke="#000" stroke-width="1"/><rect x="14" y="16" width="4" height="1" fill="#0000a8"/><rect x="14" y="17" width="3" height="1" fill="#0000a8"/><rect x="17" y="12" width="1" height="5" fill="#0000a8"/><rect x="16" y="13" width="3" height="1" fill="#0000a8"/><rect x="15" y="14" width="5" height="1" fill="#0000a8"/></g></svg>
<div class="b" style="left:373px;top:53px;width:24px;height:23px;background:#f0f0f0;border:1px solid #000;box-shadow:inset 1px 1px 0 #fff,inset -1px -1px 0 #808080,inset -2px -2px 0 #808080;"></div>
<svg class="b" style="left:373px;top:53px;" width="24" height="23" viewBox="0 0 24 23" ><g class="ce"><rect x="6" y="6" width="1" height="1" fill="#cfcfcf"/><rect x="8" y="6" width="1" height="1" fill="#cfcfcf"/><rect x="10" y="6" width="1" height="1" fill="#cfcfcf"/><rect x="12" y="6" width="1" height="1" fill="#cfcfcf"/><rect x="14" y="6" width="1" height="1" fill="#cfcfcf"/><rect x="16" y="6" width="1" height="1" fill="#cfcfcf"/><rect x="18" y="6" width="1" height="1" fill="#cfcfcf"/><rect x="7" y="7" width="1" height="1" fill="#cfcfcf"/><rect x="9" y="7" width="1" height="1" fill="#cfcfcf"/><rect x="11" y="7" width="1" height="1" fill="#cfcfcf"/><rect x="13" y="7" width="1" height="1" fill="#cfcfcf"/><rect x="15" y="7" width="1" height="1" fill="#cfcfcf"/><rect x="17" y="7" width="1" height="1" fill="#cfcfcf"/><rect x="6" y="8" width="1" height="1" fill="#cfcfcf"/><rect x="8" y="8" width="1" height="1" fill="#cfcfcf"/><rect x="10" y="8" width="1" height="1" fill="#cfcfcf"/><rect x="12" y="8" width="1" height="1" fill="#cfcfcf"/><rect x="14" y="8" width="1" height="1" fill="#cfcfcf"/><rect x="16" y="8" width="1" height="1" fill="#cfcfcf"/><rect x="18" y="8" width="1" height="1" fill="#cfcfcf"/><rect x="7" y="9" width="1" height="1" fill="#cfcfcf"/><rect x="9" y="9" width="1" height="1" fill="#cfcfcf"/><rect x="11" y="9" width="1" height="1" fill="#cfcfcf"/><rect x="13" y="9" width="1" height="1" fill="#cfcfcf"/><rect x="15" y="9" width="1" height="1" fill="#cfcfcf"/><rect x="17" y="9" width="1" height="1" fill="#cfcfcf"/><rect x="6" y="10" width="1" height="1" fill="#cfcfcf"/><rect x="8" y="10" width="1" height="1" fill="#cfcfcf"/><rect x="10" y="10" width="1" height="1" fill="#cfcfcf"/><rect x="12" y="10" width="1" height="1" fill="#cfcfcf"/><rect x="14" y="10" width="1" height="1" fill="#cfcfcf"/><rect x="16" y="10" width="1" height="1" fill="#cfcfcf"/><rect x="18" y="10" width="1" height="1" fill="#cfcfcf"/><rect x="7" y="11" width="1" height="1" fill="#cfcfcf"/><rect x="9" y="11" width="1" height="1" fill="#cfcfcf"/><rect x="11" y="11" width="1" height="1" fill="#cfcfcf"/><rect x="13" y="11" width="1" height="1" fill="#cfcfcf"/><rect x="15" y="11" width="1" height="1" fill="#cfcfcf"/><rect x="17" y="11" width="1" height="1" fill="#cfcfcf"/><rect x="6" y="12" width="1" height="1" fill="#cfcfcf"/><rect x="8" y="12" width="1" height="1" fill="#cfcfcf"/><rect x="10" y="12" width="1" height="1" fill="#cfcfcf"/><rect x="12" y="12" width="1" height="1" fill="#cfcfcf"/><rect x="14" y="12" width="1" height="1" fill="#cfcfcf"/><rect x="16" y="12" width="1" height="1" fill="#cfcfcf"/><rect x="18" y="12" width="1" height="1" fill="#cfcfcf"/><rect x="7" y="13" width="1" height="1" fill="#cfcfcf"/><rect x="9" y="13" width="1" height="1" fill="#cfcfcf"/><rect x="11" y="13" width="1" height="1" fill="#cfcfcf"/><rect x="13" y="13" width="1" height="1" fill="#cfcfcf"/><rect x="15" y="13" width="1" height="1" fill="#cfcfcf"/><rect x="17" y="13" width="1" height="1" fill="#cfcfcf"/><rect x="6" y="14" width="1" height="1" fill="#cfcfcf"/><rect x="8" y="14" width="1" height="1" fill="#cfcfcf"/><rect x="10" y="14" width="1" height="1" fill="#cfcfcf"/><rect x="12" y="14" width="1" height="1" fill="#cfcfcf"/><rect x="14" y="14" width="1" height="1" fill="#cfcfcf"/><rect x="16" y="14" width="1" height="1" fill="#cfcfcf"/><rect x="18" y="14" width="1" height="1" fill="#cfcfcf"/><rect x="7" y="15" width="1" height="1" fill="#cfcfcf"/><rect x="9" y="15" width="1" height="1" fill="#cfcfcf"/><rect x="11" y="15" width="1" height="1" fill="#cfcfcf"/><rect x="13" y="15" width="1" height="1" fill="#cfcfcf"/><rect x="15" y="15" width="1" height="1" fill="#cfcfcf"/><rect x="17" y="15" width="1" height="1" fill="#cfcfcf"/><rect x="6" y="16" width="1" height="1" fill="#cfcfcf"/><rect x="8" y="16" width="1" height="1" fill="#cfcfcf"/><rect x="10" y="16" width="1" height="1" fill="#cfcfcf"/><rect x="12" y="16" width="1" height="1" fill="#cfcfcf"/><rect x="14" y="16" width="1" height="1" fill="#cfcfcf"/><rect x="16" y="16" width="1" height="1" fill="#cfcfcf"/><rect x="18" y="16" width="1" height="1" fill="#cfcfcf"/><rect x="7" y="17" width="1" height="1" fill="#cfcfcf"/><rect x="9" y="17" width="1" height="1" fill="#cfcfcf"/><rect x="11" y="17" width="1" height="1" fill="#cfcfcf"/><rect x="13" y="17" width="1" height="1" fill="#cfcfcf"/><rect x="15" y="17" width="1" height="1" fill="#cfcfcf"/><rect x="17" y="17" width="1" height="1" fill="#cfcfcf"/><rect x="5" y="5" width="1" height="1" fill="#000"/><rect x="5" y="18" width="1" height="1" fill="#000"/><rect x="7" y="5" width="1" height="1" fill="#000"/><rect x="7" y="18" width="1" height="1" fill="#000"/><rect x="9" y="5" width="1" height="1" fill="#000"/><rect x="9" y="18" width="1" height="1" fill="#000"/><rect x="11" y="5" width="1" height="1" fill="#000"/><rect x="11" y="18" width="1" height="1" fill="#000"/><rect x="13" y="5" width="1" height="1" fill="#000"/><rect x="13" y="18" width="1" height="1" fill="#000"/><rect x="15" y="5" width="1" height="1" fill="#000"/><rect x="15" y="18" width="1" height="1" fill="#000"/><rect x="17" y="5" width="1" height="1" fill="#000"/><rect x="17" y="18" width="1" height="1" fill="#000"/><rect x="19" y="5" width="1" height="1" fill="#000"/><rect x="19" y="18" width="1" height="1" fill="#000"/><rect x="5" y="5" width="1" height="1" fill="#000"/><rect x="19" y="5" width="1" height="1" fill="#000"/><rect x="5" y="7" width="1" height="1" fill="#000"/><rect x="19" y="7" width="1" height="1" fill="#000"/><rect x="5" y="9" width="1" height="1" fill="#000"/><rect x="19" y="9" width="1" height="1" fill="#000"/><rect x="5" y="11" width="1" height="1" fill="#000"/><rect x="19" y="11" width="1" height="1" fill="#000"/><rect x="5" y="13" width="1" height="1" fill="#000"/><rect x="19" y="13" width="1" height="1" fill="#000"/><rect x="5" y="15" width="1" height="1" fill="#000"/><rect x="19" y="15" width="1" height="1" fill="#000"/><rect x="5" y="17" width="1" height="1" fill="#000"/><rect x="19" y="17" width="1" height="1" fill="#000"/><rect x="5" y="11" width="1" height="1" fill="#000"/><rect x="7" y="11" width="1" height="1" fill="#000"/><rect x="9" y="11" width="1" height="1" fill="#000"/><rect x="11" y="11" width="1" height="1" fill="#000"/><rect x="13" y="11" width="1" height="1" fill="#000"/><rect x="15" y="11" width="1" height="1" fill="#000"/><rect x="17" y="11" width="1" height="1" fill="#000"/><rect x="19" y="11" width="1" height="1" fill="#000"/><rect x="12" y="5" width="1" height="1" fill="#000"/><rect x="12" y="7" width="1" height="1" fill="#000"/><rect x="12" y="9" width="1" height="1" fill="#000"/><rect x="12" y="11" width="1" height="1" fill="#000"/><rect x="12" y="13" width="1" height="1" fill="#000"/><rect x="12" y="15" width="1" height="1" fill="#000"/><rect x="12" y="17" width="1" height="1" fill="#000"/><rect x="11" y="10" width="1" height="1" fill="#000"/><rect x="13" y="10" width="1" height="1" fill="#000"/><rect x="11" y="12" width="1" height="1" fill="#000"/><rect x="13" y="12" width="1" height="1" fill="#000"/><rect x="6" y="6" width="1" height="1" fill="#000"/><rect x="18" y="6" width="1" height="1" fill="#000"/><rect x="6" y="17" width="1" height="1" fill="#000"/><rect x="18" y="17" width="1" height="1" fill="#000"/><rect x="11" y="6" width="1" height="1" fill="#000"/><rect x="13" y="6" width="1" height="1" fill="#000"/><rect x="11" y="17" width="1" height="1" fill="#000"/><rect x="13" y="17" width="1" height="1" fill="#000"/><rect x="6" y="10" width="1" height="1" fill="#000"/><rect x="6" y="12" width="1" height="1" fill="#000"/></g></svg>
<div class="b" style="left:398px;top:53px;width:24px;height:23px;background:#f0f0f0;border:1px solid #000;box-shadow:inset 1px 1px 0 #fff,inset -1px -1px 0 #808080,inset -2px -2px 0 #808080;"></div>
<svg class="b" style="left:398px;top:53px;" width="24" height="23" viewBox="0 0 24 23" ><g class="ce"><rect x="4.5" y="10.5" width="10" height="3" fill="#fff" stroke="#000" stroke-width="1"/><rect x="16.5" y="4.5" width="3" height="14" fill="#fff" stroke="#000" stroke-width="1"/></g></svg>
<div class="b" style="left:506px;top:53px;width:24px;height:23px;background:#f0f0f0;border:1px solid #000;box-shadow:inset 1px 1px 0 #fff,inset -1px -1px 0 #808080,inset -2px -2px 0 #808080;"></div>
<svg class="b" style="left:506px;top:53px;" width="24" height="23" viewBox="0 0 24 23" ><g class="ce"><rect x="4.5" y="4.5" width="6" height="14" fill="#0ff" stroke="#000" stroke-width="1"/><rect x="7" y="5" width="1" height="13" fill="#000"/><rect x="5" y="11" width="5" height="1" fill="#000"/><rect x="6" y="7" width="3" height="1" fill="#000"/><rect x="6" y="15" width="3" height="1" fill="#000"/><rect x="5" y="8" width="1" height="1" fill="#000"/><rect x="9" y="8" width="1" height="1" fill="#000"/><rect x="5" y="14" width="1" height="1" fill="#000"/><rect x="9" y="14" width="1" height="1" fill="#000"/><rect x="13.5" y="6.5" width="6" height="10" fill="#0ff" stroke="#000" stroke-width="1"/><rect x="13" y="6" width="1" height="11" fill="#000"/><path d="M14.5 7.5 L18.5 11.5 L14.5 15.5" stroke="#000" fill="none" stroke-width="1"/></g></svg>
<div class="b" style="left:532px;top:53px;width:24px;height:23px;background:#f0f0f0;border:1px solid #000;box-shadow:inset 1px 1px 0 #fff,inset -1px -1px 0 #808080,inset -2px -2px 0 #808080;"></div>
<svg class="b" style="left:532px;top:53px;" width="24" height="23" viewBox="0 0 24 23" ><g class="ce"><rect x="9.5" y="4.5" width="9" height="12" fill="#0ee" stroke="#007878" stroke-width="1"/><rect x="5.5" y="6.5" width="11" height="12" fill="#0ff" stroke="#007878" stroke-width="1"/><path d="M8.3 14 L12.3 10 M11 16.3 L15 12.3" stroke="#0000d0" fill="none" stroke-width="1.3"/></g></svg>
<div class="b" style="left:557px;top:53px;width:24px;height:23px;background:#f0f0f0;border:1px solid #000;box-shadow:inset 1px 1px 0 #fff,inset -1px -1px 0 #808080,inset -2px -2px 0 #808080;"></div>
<svg class="b" style="left:557px;top:53px;" width="24" height="23" viewBox="0 0 24 23" ><g class="ce"></g><g><path d="M8.5 12.5 V9 Q8.5 5.5 12 5.5 Q15.5 5.5 15.5 9 V12.5 Z" stroke="#000" fill="#fff" stroke-width="1"/></g><g class="ce"><rect x="8.5" y="14.5" width="7" height="3" fill="#fff" stroke="#000" stroke-width="1"/></g></svg>
<div class="b" style="left:583px;top:53px;width:24px;height:23px;background:#f0f0f0;border:1px solid #000;box-shadow:inset 1px 1px 0 #fff,inset -1px -1px 0 #808080,inset -2px -2px 0 #808080;"></div>
<svg class="b" style="left:583px;top:53px;" width="24" height="23" viewBox="0 0 24 23" ><g class="ce"><rect x="4" y="9" width="6" height="1" fill="#000"/><rect x="4" y="11" width="6" height="1" fill="#ff0"/><rect x="4" y="12" width="6" height="1" fill="#ee4"/><rect x="4" y="13" width="6" height="1" fill="#00f"/><rect x="4" y="15" width="6" height="1" fill="#0ff"/><rect x="4" y="17" width="6" height="1" fill="#f00"/><rect x="14" y="6" width="7" height="1" fill="#000"/><rect x="20" y="6" width="1" height="6" fill="#00f"/><rect x="14" y="12" width="7" height="1" fill="#f00"/><rect x="14" y="17" width="5" height="1" fill="#000"/><rect x="18" y="15" width="1" height="2" fill="#000"/><rect x="17" y="15" width="3" height="1" fill="#000"/><rect x="18" y="14" width="2" height="1" fill="#000"/></g></svg>
<div class="b" style="left:611px;top:53px;width:24px;height:23px;background:#f0f0f0;border:1px solid #000;box-shadow:inset 1px 1px 0 #fff,inset -1px -1px 0 #808080,inset -2px -2px 0 #808080;"></div>
<svg class="b" style="left:611px;top:53px;" width="24" height="23" viewBox="0 0 24 23" ><g class="ce"><rect x="4" y="4" width="16" height="15" fill="#0ff"/><rect x="12" y="4" width="1" height="2" fill="#000"/><rect x="11" y="6" width="3" height="1" fill="#8a0a0a"/><rect x="10" y="7" width="5" height="1" fill="#8a0a0a"/><rect x="9" y="8" width="7" height="2" fill="#8a0a0a"/><rect x="9" y="10" width="7" height="1" fill="#8a0a0a"/><rect x="10" y="11" width="5" height="1" fill="#8a0a0a"/><rect x="5" y="11" width="3" height="1" fill="#000"/><rect x="16" y="11" width="4" height="1" fill="#000"/><rect x="6" y="12" width="13" height="2" fill="#8a0a0a"/><rect x="4" y="12" width="2" height="1" fill="#000"/><rect x="18" y="12" width="2" height="1" fill="#000"/><rect x="7" y="14" width="4" height="1" fill="#8a0a0a"/><rect x="14" y="14" width="4" height="1" fill="#8a0a0a"/><rect x="8" y="15" width="2" height="1" fill="#000"/><rect x="14" y="15" width="2" height="1" fill="#000"/><rect x="9" y="7" width="1" height="1" fill="#000"/><rect x="15" y="7" width="1" height="1" fill="#000"/><rect x="8" y="9" width="1" height="1" fill="#000"/><rect x="16" y="9" width="1" height="1" fill="#000"/><rect x="11" y="14" width="3" height="1" fill="#080"/><rect x="10" y="15" width="4" height="1" fill="#080"/><rect x="10" y="16" width="5" height="1" fill="#080"/><rect x="9" y="17" width="6" height="1" fill="#080"/><rect x="9" y="18" width="7" height="1" fill="#080"/></g></svg>
<div class="b" style="left:637px;top:53px;width:24px;height:23px;background:#f0f0f0;border:1px solid #000;box-shadow:inset 1px 1px 0 #fff,inset -1px -1px 0 #808080,inset -2px -2px 0 #808080;"></div>
<svg class="b" style="left:637px;top:53px;" width="24" height="23" viewBox="0 0 24 23" ><g class="ce"><rect x="6" y="5" width="1" height="1" fill="#b4b4b4"/><rect x="8" y="5" width="1" height="1" fill="#b4b4b4"/><rect x="10" y="5" width="1" height="1" fill="#b4b4b4"/><rect x="12" y="5" width="1" height="1" fill="#b4b4b4"/><rect x="14" y="5" width="1" height="1" fill="#b4b4b4"/><rect x="16" y="5" width="1" height="1" fill="#b4b4b4"/><rect x="18" y="5" width="1" height="1" fill="#b4b4b4"/><rect x="7" y="6" width="1" height="1" fill="#b4b4b4"/><rect x="9" y="6" width="1" height="1" fill="#b4b4b4"/><rect x="11" y="6" width="1" height="1" fill="#b4b4b4"/><rect x="13" y="6" width="1" height="1" fill="#b4b4b4"/><rect x="15" y="6" width="1" height="1" fill="#b4b4b4"/><rect x="17" y="6" width="1" height="1" fill="#b4b4b4"/><rect x="6" y="7" width="1" height="1" fill="#b4b4b4"/><rect x="8" y="7" width="1" height="1" fill="#b4b4b4"/><rect x="10" y="7" width="1" height="1" fill="#b4b4b4"/><rect x="12" y="7" width="1" height="1" fill="#b4b4b4"/><rect x="14" y="7" width="1" height="1" fill="#b4b4b4"/><rect x="16" y="7" width="1" height="1" fill="#b4b4b4"/><rect x="18" y="7" width="1" height="1" fill="#b4b4b4"/><rect x="7" y="8" width="1" height="1" fill="#b4b4b4"/><rect x="9" y="8" width="1" height="1" fill="#b4b4b4"/><rect x="11" y="8" width="1" height="1" fill="#b4b4b4"/><rect x="13" y="8" width="1" height="1" fill="#b4b4b4"/><rect x="15" y="8" width="1" height="1" fill="#b4b4b4"/><rect x="17" y="8" width="1" height="1" fill="#b4b4b4"/><rect x="6" y="9" width="1" height="1" fill="#b4b4b4"/><rect x="8" y="9" width="1" height="1" fill="#b4b4b4"/><rect x="10" y="9" width="1" height="1" fill="#b4b4b4"/><rect x="12" y="9" width="1" height="1" fill="#b4b4b4"/><rect x="14" y="9" width="1" height="1" fill="#b4b4b4"/><rect x="16" y="9" width="1" height="1" fill="#b4b4b4"/><rect x="18" y="9" width="1" height="1" fill="#b4b4b4"/><rect x="7" y="10" width="1" height="1" fill="#b4b4b4"/><rect x="9" y="10" width="1" height="1" fill="#b4b4b4"/><rect x="11" y="10" width="1" height="1" fill="#b4b4b4"/><rect x="13" y="10" width="1" height="1" fill="#b4b4b4"/><rect x="15" y="10" width="1" height="1" fill="#b4b4b4"/><rect x="17" y="10" width="1" height="1" fill="#b4b4b4"/><rect x="6" y="11" width="1" height="1" fill="#b4b4b4"/><rect x="8" y="11" width="1" height="1" fill="#b4b4b4"/><rect x="10" y="11" width="1" height="1" fill="#b4b4b4"/><rect x="12" y="11" width="1" height="1" fill="#b4b4b4"/><rect x="14" y="11" width="1" height="1" fill="#b4b4b4"/><rect x="16" y="11" width="1" height="1" fill="#b4b4b4"/><rect x="18" y="11" width="1" height="1" fill="#b4b4b4"/><rect x="7" y="12" width="1" height="1" fill="#b4b4b4"/><rect x="9" y="12" width="1" height="1" fill="#b4b4b4"/><rect x="11" y="12" width="1" height="1" fill="#b4b4b4"/><rect x="13" y="12" width="1" height="1" fill="#b4b4b4"/><rect x="15" y="12" width="1" height="1" fill="#b4b4b4"/><rect x="17" y="12" width="1" height="1" fill="#b4b4b4"/><rect x="6" y="13" width="1" height="1" fill="#b4b4b4"/><rect x="8" y="13" width="1" height="1" fill="#b4b4b4"/><rect x="10" y="13" width="1" height="1" fill="#b4b4b4"/><rect x="12" y="13" width="1" height="1" fill="#b4b4b4"/><rect x="14" y="13" width="1" height="1" fill="#b4b4b4"/><rect x="16" y="13" width="1" height="1" fill="#b4b4b4"/><rect x="18" y="13" width="1" height="1" fill="#b4b4b4"/><rect x="7" y="14" width="1" height="1" fill="#b4b4b4"/><rect x="9" y="14" width="1" height="1" fill="#b4b4b4"/><rect x="11" y="14" width="1" height="1" fill="#b4b4b4"/><rect x="13" y="14" width="1" height="1" fill="#b4b4b4"/><rect x="15" y="14" width="1" height="1" fill="#b4b4b4"/><rect x="17" y="14" width="1" height="1" fill="#b4b4b4"/><rect x="6" y="15" width="1" height="1" fill="#b4b4b4"/><rect x="8" y="15" width="1" height="1" fill="#b4b4b4"/><rect x="10" y="15" width="1" height="1" fill="#b4b4b4"/><rect x="12" y="15" width="1" height="1" fill="#b4b4b4"/><rect x="14" y="15" width="1" height="1" fill="#b4b4b4"/><rect x="16" y="15" width="1" height="1" fill="#b4b4b4"/><rect x="18" y="15" width="1" height="1" fill="#b4b4b4"/><rect x="7" y="16" width="1" height="1" fill="#b4b4b4"/><rect x="9" y="16" width="1" height="1" fill="#b4b4b4"/><rect x="11" y="16" width="1" height="1" fill="#b4b4b4"/><rect x="13" y="16" width="1" height="1" fill="#b4b4b4"/><rect x="15" y="16" width="1" height="1" fill="#b4b4b4"/><rect x="17" y="16" width="1" height="1" fill="#b4b4b4"/><rect x="6" y="17" width="1" height="1" fill="#b4b4b4"/><rect x="8" y="17" width="1" height="1" fill="#b4b4b4"/><rect x="10" y="17" width="1" height="1" fill="#b4b4b4"/><rect x="12" y="17" width="1" height="1" fill="#b4b4b4"/><rect x="14" y="17" width="1" height="1" fill="#b4b4b4"/><rect x="16" y="17" width="1" height="1" fill="#b4b4b4"/><rect x="18" y="17" width="1" height="1" fill="#b4b4b4"/><rect x="5" y="5" width="1" height="1" fill="#000"/><rect x="5" y="17" width="1" height="1" fill="#000"/><rect x="7" y="5" width="1" height="1" fill="#000"/><rect x="7" y="17" width="1" height="1" fill="#000"/><rect x="9" y="5" width="1" height="1" fill="#000"/><rect x="9" y="17" width="1" height="1" fill="#000"/><rect x="11" y="5" width="1" height="1" fill="#000"/><rect x="11" y="17" width="1" height="1" fill="#000"/><rect x="13" y="5" width="1" height="1" fill="#000"/><rect x="13" y="17" width="1" height="1" fill="#000"/><rect x="15" y="5" width="1" height="1" fill="#000"/><rect x="15" y="17" width="1" height="1" fill="#000"/><rect x="17" y="5" width="1" height="1" fill="#000"/><rect x="17" y="17" width="1" height="1" fill="#000"/><rect x="19" y="5" width="1" height="1" fill="#000"/><rect x="19" y="17" width="1" height="1" fill="#000"/><rect x="5" y="5" width="1" height="1" fill="#000"/><rect x="19" y="5" width="1" height="1" fill="#000"/><rect x="5" y="7" width="1" height="1" fill="#000"/><rect x="19" y="7" width="1" height="1" fill="#000"/><rect x="5" y="9" width="1" height="1" fill="#000"/><rect x="19" y="9" width="1" height="1" fill="#000"/><rect x="5" y="11" width="1" height="1" fill="#000"/><rect x="19" y="11" width="1" height="1" fill="#000"/><rect x="5" y="13" width="1" height="1" fill="#000"/><rect x="19" y="13" width="1" height="1" fill="#000"/><rect x="5" y="15" width="1" height="1" fill="#000"/><rect x="19" y="15" width="1" height="1" fill="#000"/><rect x="5" y="17" width="1" height="1" fill="#000"/><rect x="19" y="17" width="1" height="1" fill="#000"/><rect x="10" y="7" width="1" height="1" fill="#444"/><rect x="12" y="7" width="1" height="1" fill="#444"/><rect x="14" y="7" width="1" height="1" fill="#444"/><rect x="11" y="8" width="1" height="1" fill="#444"/><rect x="13" y="8" width="1" height="1" fill="#444"/><rect x="10" y="9" width="1" height="1" fill="#444"/><rect x="12" y="9" width="1" height="1" fill="#444"/><rect x="14" y="9" width="1" height="1" fill="#444"/><rect x="11" y="10" width="1" height="1" fill="#444"/><rect x="13" y="10" width="1" height="1" fill="#444"/><rect x="10" y="11" width="1" height="1" fill="#444"/><rect x="12" y="11" width="1" height="1" fill="#444"/><rect x="14" y="11" width="1" height="1" fill="#444"/><rect x="11" y="12" width="1" height="1" fill="#444"/><rect x="13" y="12" width="1" height="1" fill="#444"/><rect x="10" y="13" width="1" height="1" fill="#444"/><rect x="12" y="13" width="1" height="1" fill="#444"/><rect x="14" y="13" width="1" height="1" fill="#444"/><rect x="11" y="14" width="1" height="1" fill="#444"/><rect x="13" y="14" width="1" height="1" fill="#444"/><rect x="10" y="15" width="1" height="1" fill="#444"/><rect x="12" y="15" width="1" height="1" fill="#444"/><rect x="14" y="15" width="1" height="1" fill="#444"/><rect x="11" y="10" width="3" height="3" fill="#bbb"/><rect x="11" y="10" width="1" height="1" fill="#333"/><rect x="13" y="10" width="1" height="1" fill="#333"/><rect x="12" y="11" width="1" height="1" fill="#333"/><rect x="11" y="12" width="1" height="1" fill="#333"/><rect x="13" y="12" width="1" height="1" fill="#333"/><rect x="6" y="18" width="1" height="1" fill="#000"/><rect x="8" y="18" width="1" height="1" fill="#000"/><rect x="10" y="18" width="1" height="1" fill="#000"/><rect x="12" y="18" width="1" height="1" fill="#000"/><rect x="14" y="18" width="1" height="1" fill="#000"/><rect x="16" y="18" width="1" height="1" fill="#000"/><rect x="18" y="18" width="1" height="1" fill="#000"/></g></svg>
<div class="b" style="left:662px;top:53px;width:24px;height:23px;background:#f0f0f0;border:1px solid #000;box-shadow:inset 1px 1px 0 #fff,inset -1px -1px 0 #808080,inset -2px -2px 0 #808080;"></div>
<svg class="b" style="left:662px;top:53px;" width="24" height="23" viewBox="0 0 24 23" ><g class="ce"><rect x="4" y="4" width="16" height="15" fill="#0ff"/><rect x="5" y="10" width="15" height="1" fill="#000"/><rect x="5" y="11" width="15" height="1" fill="#fff"/><rect x="5" y="12" width="15" height="1" fill="#000"/><rect x="8" y="5" width="1" height="13" fill="#000"/><rect x="9" y="5" width="1" height="13" fill="#fff"/><rect x="10" y="5" width="1" height="13" fill="#000"/><rect x="15" y="5" width="1" height="13" fill="#000"/><rect x="16" y="5" width="1" height="13" fill="#fff"/><rect x="17" y="5" width="1" height="13" fill="#000"/></g></svg>
<div class="b" style="left:692px;top:53px;width:24px;height:23px;background:#f0f0f0;border:1px solid #000;box-shadow:inset 1px 1px 0 #fff,inset -1px -1px 0 #808080,inset -2px -2px 0 #808080;"></div>
<svg class="b" style="left:692px;top:53px;" width="24" height="23" viewBox="0 0 24 23" ><g class="ce"></g><g><path d="M6 6 L18.3 17.3 M18.3 6 L6 17.3" stroke="#f00" fill="none" stroke-width="1.5"/></g><g class="ce"></g></svg>
<div class="b" style="left:718px;top:53px;width:24px;height:23px;background:#f0f0f0;border:1px solid #000;box-shadow:inset 1px 1px 0 #fff,inset -1px -1px 0 #808080,inset -2px -2px 0 #808080;"></div>
<svg class="b" style="left:718px;top:53px;" width="24" height="23" viewBox="0 0 24 23" ><g class="ce"></g><g><path d="M11.5 9 H14 Q17 9.2 17 12.5 Q17 16.5 13 16.5 H9" stroke="#0000a8" fill="none" stroke-width="2.2"/><path d="M6.5 9 L12 4.6 V13.4 Z" stroke="none" fill="#0000a8" stroke-width="1"/></g><g class="ce"></g></svg>
<div class="b" style="left:746px;top:53px;width:24px;height:23px;background:#f0f0f0;border:1px solid #000;box-shadow:inset 1px 1px 0 #fff,inset -1px -1px 0 #808080,inset -2px -2px 0 #808080;"></div>
<svg class="b" style="left:746px;top:53px;" width="24" height="23" viewBox="0 0 24 23" ><g class="ce"><rect x="4" y="4" width="1" height="1" fill="#c8c8c8"/><rect x="6" y="4" width="1" height="1" fill="#c8c8c8"/><rect x="8" y="4" width="1" height="1" fill="#c8c8c8"/><rect x="10" y="4" width="1" height="1" fill="#c8c8c8"/><rect x="12" y="4" width="1" height="1" fill="#c8c8c8"/><rect x="14" y="4" width="1" height="1" fill="#c8c8c8"/><rect x="16" y="4" width="1" height="1" fill="#c8c8c8"/><rect x="18" y="4" width="1" height="1" fill="#c8c8c8"/><rect x="5" y="5" width="1" height="1" fill="#c8c8c8"/><rect x="7" y="5" width="1" height="1" fill="#c8c8c8"/><rect x="9" y="5" width="1" height="1" fill="#c8c8c8"/><rect x="11" y="5" width="1" height="1" fill="#c8c8c8"/><rect x="13" y="5" width="1" height="1" fill="#c8c8c8"/><rect x="15" y="5" width="1" height="1" fill="#c8c8c8"/><rect x="17" y="5" width="1" height="1" fill="#c8c8c8"/><rect x="19" y="5" width="1" height="1" fill="#c8c8c8"/><rect x="4" y="6" width="1" height="1" fill="#c8c8c8"/><rect x="6" y="6" width="1" height="1" fill="#c8c8c8"/><rect x="8" y="6" width="1" height="1" fill="#c8c8c8"/><rect x="10" y="6" width="1" height="1" fill="#c8c8c8"/><rect x="12" y="6" width="1" height="1" fill="#c8c8c8"/><rect x="14" y="6" width="1" height="1" fill="#c8c8c8"/><rect x="16" y="6" width="1" height="1" fill="#c8c8c8"/><rect x="18" y="6" width="1" height="1" fill="#c8c8c8"/><rect x="5" y="7" width="1" height="1" fill="#c8c8c8"/><rect x="7" y="7" width="1" height="1" fill="#c8c8c8"/><rect x="9" y="7" width="1" height="1" fill="#c8c8c8"/><rect x="11" y="7" width="1" height="1" fill="#c8c8c8"/><rect x="13" y="7" width="1" height="1" fill="#c8c8c8"/><rect x="15" y="7" width="1" height="1" fill="#c8c8c8"/><rect x="17" y="7" width="1" height="1" fill="#c8c8c8"/><rect x="19" y="7" width="1" height="1" fill="#c8c8c8"/><rect x="4" y="8" width="1" height="1" fill="#c8c8c8"/><rect x="6" y="8" width="1" height="1" fill="#c8c8c8"/><rect x="8" y="8" width="1" height="1" fill="#c8c8c8"/><rect x="10" y="8" width="1" height="1" fill="#c8c8c8"/><rect x="12" y="8" width="1" height="1" fill="#c8c8c8"/><rect x="14" y="8" width="1" height="1" fill="#c8c8c8"/><rect x="16" y="8" width="1" height="1" fill="#c8c8c8"/><rect x="18" y="8" width="1" height="1" fill="#c8c8c8"/><rect x="5" y="9" width="1" height="1" fill="#c8c8c8"/><rect x="7" y="9" width="1" height="1" fill="#c8c8c8"/><rect x="9" y="9" width="1" height="1" fill="#c8c8c8"/><rect x="11" y="9" width="1" height="1" fill="#c8c8c8"/><rect x="13" y="9" width="1" height="1" fill="#c8c8c8"/><rect x="15" y="9" width="1" height="1" fill="#c8c8c8"/><rect x="17" y="9" width="1" height="1" fill="#c8c8c8"/><rect x="19" y="9" width="1" height="1" fill="#c8c8c8"/><rect x="4" y="10" width="1" height="1" fill="#c8c8c8"/><rect x="6" y="10" width="1" height="1" fill="#c8c8c8"/><rect x="8" y="10" width="1" height="1" fill="#c8c8c8"/><rect x="10" y="10" width="1" height="1" fill="#c8c8c8"/><rect x="12" y="10" width="1" height="1" fill="#c8c8c8"/><rect x="14" y="10" width="1" height="1" fill="#c8c8c8"/><rect x="16" y="10" width="1" height="1" fill="#c8c8c8"/><rect x="18" y="10" width="1" height="1" fill="#c8c8c8"/><rect x="5" y="11" width="1" height="1" fill="#c8c8c8"/><rect x="7" y="11" width="1" height="1" fill="#c8c8c8"/><rect x="9" y="11" width="1" height="1" fill="#c8c8c8"/><rect x="11" y="11" width="1" height="1" fill="#c8c8c8"/><rect x="13" y="11" width="1" height="1" fill="#c8c8c8"/><rect x="15" y="11" width="1" height="1" fill="#c8c8c8"/><rect x="17" y="11" width="1" height="1" fill="#c8c8c8"/><rect x="19" y="11" width="1" height="1" fill="#c8c8c8"/><rect x="4" y="12" width="1" height="1" fill="#c8c8c8"/><rect x="6" y="12" width="1" height="1" fill="#c8c8c8"/><rect x="8" y="12" width="1" height="1" fill="#c8c8c8"/><rect x="10" y="12" width="1" height="1" fill="#c8c8c8"/><rect x="12" y="12" width="1" height="1" fill="#c8c8c8"/><rect x="14" y="12" width="1" height="1" fill="#c8c8c8"/><rect x="16" y="12" width="1" height="1" fill="#c8c8c8"/><rect x="18" y="12" width="1" height="1" fill="#c8c8c8"/><rect x="5" y="13" width="1" height="1" fill="#c8c8c8"/><rect x="7" y="13" width="1" height="1" fill="#c8c8c8"/><rect x="9" y="13" width="1" height="1" fill="#c8c8c8"/><rect x="11" y="13" width="1" height="1" fill="#c8c8c8"/><rect x="13" y="13" width="1" height="1" fill="#c8c8c8"/><rect x="15" y="13" width="1" height="1" fill="#c8c8c8"/><rect x="17" y="13" width="1" height="1" fill="#c8c8c8"/><rect x="19" y="13" width="1" height="1" fill="#c8c8c8"/><rect x="4" y="14" width="1" height="1" fill="#c8c8c8"/><rect x="6" y="14" width="1" height="1" fill="#c8c8c8"/><rect x="8" y="14" width="1" height="1" fill="#c8c8c8"/><rect x="10" y="14" width="1" height="1" fill="#c8c8c8"/><rect x="12" y="14" width="1" height="1" fill="#c8c8c8"/><rect x="14" y="14" width="1" height="1" fill="#c8c8c8"/><rect x="16" y="14" width="1" height="1" fill="#c8c8c8"/><rect x="18" y="14" width="1" height="1" fill="#c8c8c8"/><rect x="5" y="15" width="1" height="1" fill="#c8c8c8"/><rect x="7" y="15" width="1" height="1" fill="#c8c8c8"/><rect x="9" y="15" width="1" height="1" fill="#c8c8c8"/><rect x="11" y="15" width="1" height="1" fill="#c8c8c8"/><rect x="13" y="15" width="1" height="1" fill="#c8c8c8"/><rect x="15" y="15" width="1" height="1" fill="#c8c8c8"/><rect x="17" y="15" width="1" height="1" fill="#c8c8c8"/><rect x="19" y="15" width="1" height="1" fill="#c8c8c8"/><rect x="4" y="16" width="1" height="1" fill="#c8c8c8"/><rect x="6" y="16" width="1" height="1" fill="#c8c8c8"/><rect x="8" y="16" width="1" height="1" fill="#c8c8c8"/><rect x="10" y="16" width="1" height="1" fill="#c8c8c8"/><rect x="12" y="16" width="1" height="1" fill="#c8c8c8"/><rect x="14" y="16" width="1" height="1" fill="#c8c8c8"/><rect x="16" y="16" width="1" height="1" fill="#c8c8c8"/><rect x="18" y="16" width="1" height="1" fill="#c8c8c8"/><rect x="5" y="17" width="1" height="1" fill="#c8c8c8"/><rect x="7" y="17" width="1" height="1" fill="#c8c8c8"/><rect x="9" y="17" width="1" height="1" fill="#c8c8c8"/><rect x="11" y="17" width="1" height="1" fill="#c8c8c8"/><rect x="13" y="17" width="1" height="1" fill="#c8c8c8"/><rect x="15" y="17" width="1" height="1" fill="#c8c8c8"/><rect x="17" y="17" width="1" height="1" fill="#c8c8c8"/><rect x="19" y="17" width="1" height="1" fill="#c8c8c8"/><rect x="4" y="18" width="1" height="1" fill="#c8c8c8"/><rect x="6" y="18" width="1" height="1" fill="#c8c8c8"/><rect x="8" y="18" width="1" height="1" fill="#c8c8c8"/><rect x="10" y="18" width="1" height="1" fill="#c8c8c8"/><rect x="12" y="18" width="1" height="1" fill="#c8c8c8"/><rect x="14" y="18" width="1" height="1" fill="#c8c8c8"/><rect x="16" y="18" width="1" height="1" fill="#c8c8c8"/><rect x="18" y="18" width="1" height="1" fill="#c8c8c8"/><rect x="7" y="7" width="1" height="1" fill="#000"/><rect x="9" y="7" width="1" height="1" fill="#000"/><rect x="11" y="7" width="1" height="1" fill="#000"/><rect x="13" y="7" width="1" height="1" fill="#000"/><rect x="15" y="7" width="1" height="1" fill="#000"/><rect x="17" y="7" width="1" height="1" fill="#000"/><rect x="8" y="7" width="1" height="1" fill="#000"/><rect x="8" y="9" width="1" height="1" fill="#000"/><rect x="8" y="11" width="1" height="1" fill="#000"/><rect x="8" y="13" width="1" height="1" fill="#000"/><rect x="18" y="7" width="1" height="1" fill="#000"/><rect x="18" y="9" width="1" height="1" fill="#000"/><rect x="18" y="11" width="1" height="1" fill="#000"/><rect x="18" y="13" width="1" height="1" fill="#000"/><rect x="6" y="6" width="1" height="1" fill="#000"/><rect x="10" y="6" width="1" height="1" fill="#000"/><rect x="16" y="6" width="1" height="1" fill="#000"/><rect x="20" y="6" width="1" height="1" fill="#000"/><rect x="8" y="14" width="1" height="1" fill="#f00"/><rect x="18" y="14" width="1" height="1" fill="#f00"/><rect x="6" y="14" width="1" height="1" fill="#000"/><rect x="7" y="15" width="1" height="1" fill="#000"/><rect x="8" y="16" width="1" height="1" fill="#000"/><rect x="9" y="15" width="1" height="1" fill="#000"/><rect x="10" y="14" width="1" height="1" fill="#000"/><rect x="16" y="14" width="1" height="1" fill="#000"/><rect x="17" y="15" width="1" height="1" fill="#000"/><rect x="18" y="16" width="1" height="1" fill="#000"/><rect x="19" y="15" width="1" height="1" fill="#000"/><rect x="20" y="14" width="1" height="1" fill="#000"/><rect x="13" y="9" width="1" height="1" fill="#00f"/><rect x="13" y="11" width="1" height="1" fill="#00f"/><rect x="13" y="13" width="1" height="1" fill="#00f"/><rect x="13" y="15" width="1" height="1" fill="#00f"/><rect x="13" y="15" width="1" height="1" fill="#00f"/><rect x="12" y="16" width="3" height="1" fill="#00f"/><rect x="11" y="17" width="1" height="1" fill="#00f"/><rect x="15" y="17" width="1" height="1" fill="#00f"/><rect x="13" y="17" width="1" height="1" fill="#00f"/></g></svg>
<div class="b" style="left:772px;top:53px;width:24px;height:23px;background:#f0f0f0;border:1px solid #000;box-shadow:inset 1px 1px 0 #fff,inset -1px -1px 0 #808080,inset -2px -2px 0 #808080;"></div>
<svg class="b" style="left:772px;top:53px;" width="24" height="23" viewBox="0 0 24 23" ><g class="ce"><rect x="4" y="4" width="1" height="1" fill="#c8c8c8"/><rect x="6" y="4" width="1" height="1" fill="#c8c8c8"/><rect x="8" y="4" width="1" height="1" fill="#c8c8c8"/><rect x="10" y="4" width="1" height="1" fill="#c8c8c8"/><rect x="12" y="4" width="1" height="1" fill="#c8c8c8"/><rect x="14" y="4" width="1" height="1" fill="#c8c8c8"/><rect x="16" y="4" width="1" height="1" fill="#c8c8c8"/><rect x="18" y="4" width="1" height="1" fill="#c8c8c8"/><rect x="5" y="5" width="1" height="1" fill="#c8c8c8"/><rect x="7" y="5" width="1" height="1" fill="#c8c8c8"/><rect x="9" y="5" width="1" height="1" fill="#c8c8c8"/><rect x="11" y="5" width="1" height="1" fill="#c8c8c8"/><rect x="13" y="5" width="1" height="1" fill="#c8c8c8"/><rect x="15" y="5" width="1" height="1" fill="#c8c8c8"/><rect x="17" y="5" width="1" height="1" fill="#c8c8c8"/><rect x="19" y="5" width="1" height="1" fill="#c8c8c8"/><rect x="4" y="6" width="1" height="1" fill="#c8c8c8"/><rect x="6" y="6" width="1" height="1" fill="#c8c8c8"/><rect x="8" y="6" width="1" height="1" fill="#c8c8c8"/><rect x="10" y="6" width="1" height="1" fill="#c8c8c8"/><rect x="12" y="6" width="1" height="1" fill="#c8c8c8"/><rect x="14" y="6" width="1" height="1" fill="#c8c8c8"/><rect x="16" y="6" width="1" height="1" fill="#c8c8c8"/><rect x="18" y="6" width="1" height="1" fill="#c8c8c8"/><rect x="5" y="7" width="1" height="1" fill="#c8c8c8"/><rect x="7" y="7" width="1" height="1" fill="#c8c8c8"/><rect x="9" y="7" width="1" height="1" fill="#c8c8c8"/><rect x="11" y="7" width="1" height="1" fill="#c8c8c8"/><rect x="13" y="7" width="1" height="1" fill="#c8c8c8"/><rect x="15" y="7" width="1" height="1" fill="#c8c8c8"/><rect x="17" y="7" width="1" height="1" fill="#c8c8c8"/><rect x="19" y="7" width="1" height="1" fill="#c8c8c8"/><rect x="4" y="8" width="1" height="1" fill="#c8c8c8"/><rect x="6" y="8" width="1" height="1" fill="#c8c8c8"/><rect x="8" y="8" width="1" height="1" fill="#c8c8c8"/><rect x="10" y="8" width="1" height="1" fill="#c8c8c8"/><rect x="12" y="8" width="1" height="1" fill="#c8c8c8"/><rect x="14" y="8" width="1" height="1" fill="#c8c8c8"/><rect x="16" y="8" width="1" height="1" fill="#c8c8c8"/><rect x="18" y="8" width="1" height="1" fill="#c8c8c8"/><rect x="5" y="9" width="1" height="1" fill="#c8c8c8"/><rect x="7" y="9" width="1" height="1" fill="#c8c8c8"/><rect x="9" y="9" width="1" height="1" fill="#c8c8c8"/><rect x="11" y="9" width="1" height="1" fill="#c8c8c8"/><rect x="13" y="9" width="1" height="1" fill="#c8c8c8"/><rect x="15" y="9" width="1" height="1" fill="#c8c8c8"/><rect x="17" y="9" width="1" height="1" fill="#c8c8c8"/><rect x="19" y="9" width="1" height="1" fill="#c8c8c8"/><rect x="4" y="10" width="1" height="1" fill="#c8c8c8"/><rect x="6" y="10" width="1" height="1" fill="#c8c8c8"/><rect x="8" y="10" width="1" height="1" fill="#c8c8c8"/><rect x="10" y="10" width="1" height="1" fill="#c8c8c8"/><rect x="12" y="10" width="1" height="1" fill="#c8c8c8"/><rect x="14" y="10" width="1" height="1" fill="#c8c8c8"/><rect x="16" y="10" width="1" height="1" fill="#c8c8c8"/><rect x="18" y="10" width="1" height="1" fill="#c8c8c8"/><rect x="5" y="11" width="1" height="1" fill="#c8c8c8"/><rect x="7" y="11" width="1" height="1" fill="#c8c8c8"/><rect x="9" y="11" width="1" height="1" fill="#c8c8c8"/><rect x="11" y="11" width="1" height="1" fill="#c8c8c8"/><rect x="13" y="11" width="1" height="1" fill="#c8c8c8"/><rect x="15" y="11" width="1" height="1" fill="#c8c8c8"/><rect x="17" y="11" width="1" height="1" fill="#c8c8c8"/><rect x="19" y="11" width="1" height="1" fill="#c8c8c8"/><rect x="4" y="12" width="1" height="1" fill="#c8c8c8"/><rect x="6" y="12" width="1" height="1" fill="#c8c8c8"/><rect x="8" y="12" width="1" height="1" fill="#c8c8c8"/><rect x="10" y="12" width="1" height="1" fill="#c8c8c8"/><rect x="12" y="12" width="1" height="1" fill="#c8c8c8"/><rect x="14" y="12" width="1" height="1" fill="#c8c8c8"/><rect x="16" y="12" width="1" height="1" fill="#c8c8c8"/><rect x="18" y="12" width="1" height="1" fill="#c8c8c8"/><rect x="5" y="13" width="1" height="1" fill="#c8c8c8"/><rect x="7" y="13" width="1" height="1" fill="#c8c8c8"/><rect x="9" y="13" width="1" height="1" fill="#c8c8c8"/><rect x="11" y="13" width="1" height="1" fill="#c8c8c8"/><rect x="13" y="13" width="1" height="1" fill="#c8c8c8"/><rect x="15" y="13" width="1" height="1" fill="#c8c8c8"/><rect x="17" y="13" width="1" height="1" fill="#c8c8c8"/><rect x="19" y="13" width="1" height="1" fill="#c8c8c8"/><rect x="4" y="14" width="1" height="1" fill="#c8c8c8"/><rect x="6" y="14" width="1" height="1" fill="#c8c8c8"/><rect x="8" y="14" width="1" height="1" fill="#c8c8c8"/><rect x="10" y="14" width="1" height="1" fill="#c8c8c8"/><rect x="12" y="14" width="1" height="1" fill="#c8c8c8"/><rect x="14" y="14" width="1" height="1" fill="#c8c8c8"/><rect x="16" y="14" width="1" height="1" fill="#c8c8c8"/><rect x="18" y="14" width="1" height="1" fill="#c8c8c8"/><rect x="5" y="15" width="1" height="1" fill="#c8c8c8"/><rect x="7" y="15" width="1" height="1" fill="#c8c8c8"/><rect x="9" y="15" width="1" height="1" fill="#c8c8c8"/><rect x="11" y="15" width="1" height="1" fill="#c8c8c8"/><rect x="13" y="15" width="1" height="1" fill="#c8c8c8"/><rect x="15" y="15" width="1" height="1" fill="#c8c8c8"/><rect x="17" y="15" width="1" height="1" fill="#c8c8c8"/><rect x="19" y="15" width="1" height="1" fill="#c8c8c8"/><rect x="4" y="16" width="1" height="1" fill="#c8c8c8"/><rect x="6" y="16" width="1" height="1" fill="#c8c8c8"/><rect x="8" y="16" width="1" height="1" fill="#c8c8c8"/><rect x="10" y="16" width="1" height="1" fill="#c8c8c8"/><rect x="12" y="16" width="1" height="1" fill="#c8c8c8"/><rect x="14" y="16" width="1" height="1" fill="#c8c8c8"/><rect x="16" y="16" width="1" height="1" fill="#c8c8c8"/><rect x="18" y="16" width="1" height="1" fill="#c8c8c8"/><rect x="5" y="17" width="1" height="1" fill="#c8c8c8"/><rect x="7" y="17" width="1" height="1" fill="#c8c8c8"/><rect x="9" y="17" width="1" height="1" fill="#c8c8c8"/><rect x="11" y="17" width="1" height="1" fill="#c8c8c8"/><rect x="13" y="17" width="1" height="1" fill="#c8c8c8"/><rect x="15" y="17" width="1" height="1" fill="#c8c8c8"/><rect x="17" y="17" width="1" height="1" fill="#c8c8c8"/><rect x="19" y="17" width="1" height="1" fill="#c8c8c8"/><rect x="4" y="18" width="1" height="1" fill="#c8c8c8"/><rect x="6" y="18" width="1" height="1" fill="#c8c8c8"/><rect x="8" y="18" width="1" height="1" fill="#c8c8c8"/><rect x="10" y="18" width="1" height="1" fill="#c8c8c8"/><rect x="12" y="18" width="1" height="1" fill="#c8c8c8"/><rect x="14" y="18" width="1" height="1" fill="#c8c8c8"/><rect x="16" y="18" width="1" height="1" fill="#c8c8c8"/><rect x="18" y="18" width="1" height="1" fill="#c8c8c8"/><rect x="4" y="13" width="1" height="1" fill="#00f"/><rect x="6" y="13" width="1" height="1" fill="#00f"/><rect x="8" y="13" width="1" height="1" fill="#00f"/><rect x="10" y="13" width="1" height="1" fill="#ee0"/><rect x="12" y="13" width="1" height="1" fill="#ee0"/><rect x="14" y="13" width="1" height="1" fill="#00f"/><rect x="16" y="13" width="1" height="1" fill="#00f"/><rect x="18" y="13" width="1" height="1" fill="#00f"/><rect x="15" y="10" width="1" height="1" fill="#088"/><rect x="17" y="10" width="1" height="1" fill="#088"/><rect x="19" y="10" width="1" height="1" fill="#088"/><rect x="13" y="10" width="2" height="1" fill="#088"/><rect x="14" y="9" width="1" height="1" fill="#088"/><rect x="15" y="8" width="1" height="1" fill="#088"/><rect x="14" y="11" width="1" height="1" fill="#088"/><rect x="15" y="12" width="1" height="1" fill="#088"/></g></svg>
<div class="b" style="left:800px;top:53px;width:24px;height:23px;background:#f0f0f0;border:1px solid #000;box-shadow:inset 1px 1px 0 #fff,inset -1px -1px 0 #808080,inset -2px -2px 0 #808080;"></div>
<svg class="b" style="left:800px;top:53px;" width="24" height="23" viewBox="0 0 24 23" ><g class="ce"></g><g><circle cx="10.6" cy="9.2" r="4" fill="#0ff" stroke="#000" stroke-width="1.5"/><rect x="8" y="8.6" width="5.2" height="1.2" fill="#f00"/><rect x="10" y="6.6" width="1.2" height="5.2" fill="#f00"/><path d="M13.6 12.2 L18.4 16.6" stroke="#000" fill="none" stroke-width="2.6"/><path d="M14.6 13.6 L19 17.6" stroke="#00f" fill="none" stroke-width="2.4"/></g><g class="ce"></g></svg>
<div class="b" style="left:826px;top:53px;width:24px;height:23px;background:#f0f0f0;border:1px solid #000;box-shadow:inset 1px 1px 0 #fff,inset -1px -1px 0 #808080,inset -2px -2px 0 #808080;"></div>
<svg class="b" style="left:826px;top:53px;" width="24" height="23" viewBox="0 0 24 23" ><g class="ce"></g><g><path d="M6.4 13.2 Q5.2 10.2 7.4 9.2 Q9.4 8.8 10.2 10.8 L11 13" stroke="#000" fill="none" stroke-width="1.25"/><circle cx="12.4" cy="7.6" r="2" fill="none" stroke="#000" stroke-width="1.25"/><path d="M14.2 6.8 L18.4 10.2" stroke="#000" fill="none" stroke-width="1.25"/><path d="M16 10.4 H18 Q19.4 10.6 19.4 12.4 Q19.4 14.4 18 14.6 H16 Z" stroke="#000" fill="#fff" stroke-width="1.25"/><path d="M10.6 13.2 H13.4 V17.4 Q12 18.2 10.6 17.4 Z" stroke="#000" fill="#fff" stroke-width="1.25"/><path d="M13.4 13.2 L15.8 11" stroke="#000" fill="none" stroke-width="1.1"/></g><g class="ce"></g></svg>
<div class="b" style="left:851px;top:53px;width:24px;height:23px;background:#f0f0f0;border:1px solid #000;box-shadow:inset 1px 1px 0 #fff,inset -1px -1px 0 #808080,inset -2px -2px 0 #808080;"></div>
<svg class="b" style="left:851px;top:53px;" width="24" height="23" viewBox="0 0 24 23" ><g class="ce"></g><g><text x="3" y="12.7" stroke="#900090" stroke-width="0.35" font-family="'Liberation Sans',Arial,sans-serif" font-size="8" fill="#900090" textLength="15.2" lengthAdjust="spacingAndGlyphs">CAD</text></g><g class="ce"></g></svg>
<div class="b" style="left:877px;top:53px;width:24px;height:23px;background:#f8f8f8;border:1px solid #000;box-shadow:inset 1px 1px 0 #808080,inset -1px -1px 0 #f0f0f0;"></div>
<svg class="b" style="left:877px;top:53px;" width="24" height="23" viewBox="0 0 24 23" ><g class="ce"><rect x="4" y="4" width="4" height="3" fill="#ff0"/><rect x="4" y="7" width="2" height="1" fill="#ff0"/><rect x="8" y="4" width="3" height="3" fill="#0ff"/><rect x="6" y="7" width="5" height="1" fill="#0ff"/><rect x="4" y="8" width="7" height="5" fill="#0ff"/><rect x="4" y="13" width="7" height="6" fill="#0e0"/><rect x="9" y="13" width="2" height="2" fill="#0ff"/><rect x="11" y="4" width="1" height="15" fill="#b9a0a0"/><rect x="4" y="12" width="4" height="3" fill="#000"/><rect x="7" y="10" width="1" height="7" fill="#000"/><rect x="8" y="11" width="1" height="5" fill="#000"/><rect x="9" y="12" width="1" height="3" fill="#000"/><rect x="10" y="13" width="1" height="1" fill="#000"/><rect x="13" y="13" width="1" height="1" fill="#000"/><rect x="14" y="12" width="1" height="3" fill="#000"/><rect x="15" y="11" width="1" height="5" fill="#000"/><rect x="16" y="10" width="1" height="7" fill="#000"/><rect x="17" y="12" width="3" height="3" fill="#000"/></g></svg>
<div class="b" style="left:902px;top:53px;width:24px;height:23px;background:#f0f0f0;border:1px solid #000;box-shadow:inset 1px 1px 0 #fff,inset -1px -1px 0 #808080,inset -2px -2px 0 #808080;"></div>
<svg class="b" style="left:902px;top:53px;" width="24" height="23" viewBox="0 0 24 23" ><g class="ce"><rect x="12" y="11" width="1" height="1" fill="#ff0"/><rect x="14" y="11" width="1" height="1" fill="#ff0"/><rect x="16" y="11" width="1" height="1" fill="#ff0"/><rect x="18" y="11" width="1" height="1" fill="#ff0"/><rect x="13" y="12" width="1" height="1" fill="#ff0"/><rect x="15" y="12" width="1" height="1" fill="#ff0"/><rect x="17" y="12" width="1" height="1" fill="#ff0"/><rect x="19" y="12" width="1" height="1" fill="#ff0"/><rect x="12" y="13" width="1" height="1" fill="#ff0"/><rect x="14" y="13" width="1" height="1" fill="#ff0"/><rect x="16" y="13" width="1" height="1" fill="#ff0"/><rect x="18" y="13" width="1" height="1" fill="#ff0"/><rect x="13" y="14" width="1" height="1" fill="#ff0"/><rect x="15" y="14" width="1" height="1" fill="#ff0"/><rect x="17" y="14" width="1" height="1" fill="#ff0"/><rect x="19" y="14" width="1" height="1" fill="#ff0"/><rect x="12" y="15" width="1" height="1" fill="#ff0"/><rect x="14" y="15" width="1" height="1" fill="#ff0"/><rect x="16" y="15" width="1" height="1" fill="#ff0"/><rect x="18" y="15" width="1" height="1" fill="#ff0"/><rect x="13" y="16" width="1" height="1" fill="#ff0"/><rect x="15" y="16" width="1" height="1" fill="#ff0"/><rect x="17" y="16" width="1" height="1" fill="#ff0"/><rect x="19" y="16" width="1" height="1" fill="#ff0"/><rect x="12" y="17" width="1" height="1" fill="#ff0"/><rect x="14" y="17" width="1" height="1" fill="#ff0"/><rect x="16" y="17" width="1" height="1" fill="#ff0"/><rect x="18" y="17" width="1" height="1" fill="#ff0"/><rect x="13" y="18" width="1" height="1" fill="#ff0"/><rect x="15" y="18" width="1" height="1" fill="#ff0"/><rect x="17" y="18" width="1" height="1" fill="#ff0"/><rect x="19" y="18" width="1" height="1" fill="#ff0"/></g><g><path d="M4.6 4.2 L6.6 3.4 L11.2 9.2 L9.2 10.4 Z" stroke="#000090" fill="#f0f0f0" stroke-width="1.3"/><path d="M9 10.6 L11.4 9 L15.2 10.4 L15.6 13.4 L12.6 15.2 L10 13.6 Z" stroke="#000090" fill="#fff" stroke-width="1.4"/><path d="M11.2 13.8 L15 11" stroke="#000090" fill="none" stroke-width="1"/><path d="M6.6 5.4 L10 9.6" stroke="#808060" fill="none" stroke-width="1"/></g><g class="ce"></g></svg>
<div class="b" style="left:928px;top:53px;width:24px;height:23px;background:#f0f0f0;border:1px solid #000;box-shadow:inset 1px 1px 0 #fff,inset -1px -1px 0 #808080,inset -2px -2px 0 #808080;"></div>
<svg class="b" style="left:928px;top:53px;" width="24" height="23" viewBox="0 0 24 23" ><g class="ce"><rect x="5" y="5" width="9" height="8" fill="#ff6"/><rect x="5" y="5" width="1" height="1" fill="#fff"/><rect x="7" y="5" width="1" height="1" fill="#fff"/><rect x="9" y="5" width="1" height="1" fill="#fff"/><rect x="11" y="5" width="1" height="1" fill="#fff"/><rect x="13" y="5" width="1" height="1" fill="#fff"/><rect x="6" y="6" width="1" height="1" fill="#fff"/><rect x="8" y="6" width="1" height="1" fill="#fff"/><rect x="10" y="6" width="1" height="1" fill="#fff"/><rect x="12" y="6" width="1" height="1" fill="#fff"/><rect x="5" y="7" width="1" height="1" fill="#fff"/><rect x="7" y="7" width="1" height="1" fill="#fff"/><rect x="9" y="7" width="1" height="1" fill="#fff"/><rect x="11" y="7" width="1" height="1" fill="#fff"/><rect x="13" y="7" width="1" height="1" fill="#fff"/><rect x="6" y="8" width="1" height="1" fill="#fff"/><rect x="8" y="8" width="1" height="1" fill="#fff"/><rect x="10" y="8" width="1" height="1" fill="#fff"/><rect x="12" y="8" width="1" height="1" fill="#fff"/><rect x="5" y="9" width="1" height="1" fill="#fff"/><rect x="7" y="9" width="1" height="1" fill="#fff"/><rect x="9" y="9" width="1" height="1" fill="#fff"/><rect x="11" y="9" width="1" height="1" fill="#fff"/><rect x="13" y="9" width="1" height="1" fill="#fff"/><rect x="6" y="10" width="1" height="1" fill="#fff"/><rect x="8" y="10" width="1" height="1" fill="#fff"/><rect x="10" y="10" width="1" height="1" fill="#fff"/><rect x="12" y="10" width="1" height="1" fill="#fff"/><rect x="5" y="11" width="1" height="1" fill="#fff"/><rect x="7" y="11" width="1" height="1" fill="#fff"/><rect x="9" y="11" width="1" height="1" fill="#fff"/><rect x="11" y="11" width="1" height="1" fill="#fff"/><rect x="13" y="11" width="1" height="1" fill="#fff"/><rect x="6" y="12" width="1" height="1" fill="#fff"/><rect x="8" y="12" width="1" height="1" fill="#fff"/><rect x="10" y="12" width="1" height="1" fill="#fff"/><rect x="12" y="12" width="1" height="1" fill="#fff"/><rect x="4" y="4" width="5" height="1" fill="#000"/><rect x="4" y="4" width="1" height="10" fill="#000"/><rect x="8" y="5" width="1" height="1" fill="#000"/><rect x="9" y="6" width="5" height="1" fill="#000"/><rect x="14" y="6" width="1" height="3" fill="#000"/><rect x="4" y="13" width="6" height="1" fill="#000"/><rect x="5" y="11" width="4" height="2" fill="#808000"/><rect x="7" y="10" width="3" height="1" fill="#808000"/><rect x="10" y="9" width="10" height="10" fill="#000"/><rect x="11" y="11" width="8" height="7" fill="#fff"/><rect x="10" y="9" width="10" height="2" fill="#00f"/><rect x="12" y="12" width="2" height="2" fill="#000"/><rect x="15" y="12" width="4" height="2" fill="#000"/><rect x="12" y="15" width="2" height="2" fill="#000"/><rect x="15" y="15" width="4" height="2" fill="#000"/><rect x="15" y="4" width="3" height="1" fill="#000"/><rect x="18" y="5" width="1" height="1" fill="#000"/><rect x="19" y="6" width="1" height="2" fill="#000"/><rect x="17" y="7" width="4" height="1" fill="#000"/><rect x="18" y="8" width="2" height="1" fill="#000"/><rect x="14" y="5" width="1" height="1" fill="#000"/></g></svg>
<div class="b" style="left:953px;top:53px;width:24px;height:23px;background:#f0f0f0;border:1px solid #000;box-shadow:inset 1px 1px 0 #fff,inset -1px -1px 0 #808080,inset -2px -2px 0 #808080;"></div>
<svg class="b" style="left:953px;top:53px;" width="24" height="23" viewBox="0 0 24 23" ><g class="ce"><rect x="5" y="3" width="14" height="16" fill="#000"/><rect x="6" y="4" width="12" height="14" fill="#6a6a6a"/><rect x="7" y="5" width="10" height="12" fill="#fff"/><rect x="15" y="3" width="4" height="4" fill="#f0f0f0"/><rect x="15" y="3" width="1" height="4" fill="#000"/><rect x="15" y="6" width="4" height="1" fill="#000"/><rect x="16" y="4" width="1" height="1" fill="#000"/><rect x="17" y="5" width="1" height="1" fill="#000"/><rect x="18" y="6" width="1" height="1" fill="#000"/><rect x="16" y="5" width="1" height="1" fill="#fff"/><rect x="7" y="11" width="3" height="6" fill="#00f"/><rect x="10" y="13" width="4" height="4" fill="#f00"/><rect x="14" y="8" width="3" height="9" fill="#008000"/><rect x="14" y="8" width="1" height="2" fill="#0f0"/></g></svg>
<div class="b" style="left:979px;top:53px;width:24px;height:23px;background:#f0f0f0;border:1px solid #000;box-shadow:inset 1px 1px 0 #fff,inset -1px -1px 0 #808080,inset -2px -2px 0 #808080;"></div>
<svg class="b" style="left:979px;top:53px;" width="24" height="23" viewBox="0 0 24 23" ><g class="ce"><rect x="5" y="4" width="1" height="1" fill="#c8c8c8"/><rect x="7" y="4" width="1" height="1" fill="#c8c8c8"/><rect x="9" y="4" width="1" height="1" fill="#c8c8c8"/><rect x="11" y="4" width="1" height="1" fill="#c8c8c8"/><rect x="13" y="4" width="1" height="1" fill="#c8c8c8"/><rect x="15" y="4" width="1" height="1" fill="#c8c8c8"/><rect x="17" y="4" width="1" height="1" fill="#c8c8c8"/><rect x="6" y="5" width="1" height="1" fill="#c8c8c8"/><rect x="8" y="5" width="1" height="1" fill="#c8c8c8"/><rect x="10" y="5" width="1" height="1" fill="#c8c8c8"/><rect x="12" y="5" width="1" height="1" fill="#c8c8c8"/><rect x="14" y="5" width="1" height="1" fill="#c8c8c8"/><rect x="16" y="5" width="1" height="1" fill="#c8c8c8"/><rect x="18" y="5" width="1" height="1" fill="#c8c8c8"/><rect x="5" y="6" width="1" height="1" fill="#c8c8c8"/><rect x="7" y="6" width="1" height="1" fill="#c8c8c8"/><rect x="9" y="6" width="1" height="1" fill="#c8c8c8"/><rect x="11" y="6" width="1" height="1" fill="#c8c8c8"/><rect x="13" y="6" width="1" height="1" fill="#c8c8c8"/><rect x="15" y="6" width="1" height="1" fill="#c8c8c8"/><rect x="17" y="6" width="1" height="1" fill="#c8c8c8"/><rect x="6" y="7" width="1" height="1" fill="#c8c8c8"/><rect x="8" y="7" width="1" height="1" fill="#c8c8c8"/><rect x="10" y="7" width="1" height="1" fill="#c8c8c8"/><rect x="12" y="7" width="1" height="1" fill="#c8c8c8"/><rect x="14" y="7" width="1" height="1" fill="#c8c8c8"/><rect x="16" y="7" width="1" height="1" fill="#c8c8c8"/><rect x="18" y="7" width="1" height="1" fill="#c8c8c8"/><rect x="5" y="8" width="1" height="1" fill="#c8c8c8"/><rect x="7" y="8" width="1" height="1" fill="#c8c8c8"/><rect x="9" y="8" width="1" height="1" fill="#c8c8c8"/><rect x="11" y="8" width="1" height="1" fill="#c8c8c8"/><rect x="13" y="8" width="1" height="1" fill="#c8c8c8"/><rect x="15" y="8" width="1" height="1" fill="#c8c8c8"/><rect x="17" y="8" width="1" height="1" fill="#c8c8c8"/><rect x="6" y="9" width="1" height="1" fill="#c8c8c8"/><rect x="8" y="9" width="1" height="1" fill="#c8c8c8"/><rect x="10" y="9" width="1" height="1" fill="#c8c8c8"/><rect x="12" y="9" width="1" height="1" fill="#c8c8c8"/><rect x="14" y="9" width="1" height="1" fill="#c8c8c8"/><rect x="16" y="9" width="1" height="1" fill="#c8c8c8"/><rect x="18" y="9" width="1" height="1" fill="#c8c8c8"/><rect x="5" y="10" width="1" height="1" fill="#c8c8c8"/><rect x="7" y="10" width="1" height="1" fill="#c8c8c8"/><rect x="9" y="10" width="1" height="1" fill="#c8c8c8"/><rect x="11" y="10" width="1" height="1" fill="#c8c8c8"/><rect x="13" y="10" width="1" height="1" fill="#c8c8c8"/><rect x="15" y="10" width="1" height="1" fill="#c8c8c8"/><rect x="17" y="10" width="1" height="1" fill="#c8c8c8"/><rect x="6" y="11" width="1" height="1" fill="#c8c8c8"/><rect x="8" y="11" width="1" height="1" fill="#c8c8c8"/><rect x="10" y="11" width="1" height="1" fill="#c8c8c8"/><rect x="12" y="11" width="1" height="1" fill="#c8c8c8"/><rect x="14" y="11" width="1" height="1" fill="#c8c8c8"/><rect x="16" y="11" width="1" height="1" fill="#c8c8c8"/><rect x="18" y="11" width="1" height="1" fill="#c8c8c8"/><rect x="5" y="12" width="1" height="1" fill="#c8c8c8"/><rect x="7" y="12" width="1" height="1" fill="#c8c8c8"/><rect x="9" y="12" width="1" height="1" fill="#c8c8c8"/><rect x="11" y="12" width="1" height="1" fill="#c8c8c8"/><rect x="13" y="12" width="1" height="1" fill="#c8c8c8"/><rect x="15" y="12" width="1" height="1" fill="#c8c8c8"/><rect x="17" y="12" width="1" height="1" fill="#c8c8c8"/><rect x="6" y="13" width="1" height="1" fill="#c8c8c8"/><rect x="8" y="13" width="1" height="1" fill="#c8c8c8"/><rect x="10" y="13" width="1" height="1" fill="#c8c8c8"/><rect x="12" y="13" width="1" height="1" fill="#c8c8c8"/><rect x="14" y="13" width="1" height="1" fill="#c8c8c8"/><rect x="16" y="13" width="1" height="1" fill="#c8c8c8"/><rect x="18" y="13" width="1" height="1" fill="#c8c8c8"/><rect x="5" y="14" width="1" height="1" fill="#c8c8c8"/><rect x="7" y="14" width="1" height="1" fill="#c8c8c8"/><rect x="9" y="14" width="1" height="1" fill="#c8c8c8"/><rect x="11" y="14" width="1" height="1" fill="#c8c8c8"/><rect x="13" y="14" width="1" height="1" fill="#c8c8c8"/><rect x="15" y="14" width="1" height="1" fill="#c8c8c8"/><rect x="17" y="14" width="1" height="1" fill="#c8c8c8"/><rect x="6" y="15" width="1" height="1" fill="#c8c8c8"/><rect x="8" y="15" width="1" height="1" fill="#c8c8c8"/><rect x="10" y="15" width="1" height="1" fill="#c8c8c8"/><rect x="12" y="15" width="1" height="1" fill="#c8c8c8"/><rect x="14" y="15" width="1" height="1" fill="#c8c8c8"/><rect x="16" y="15" width="1" height="1" fill="#c8c8c8"/><rect x="18" y="15" width="1" height="1" fill="#c8c8c8"/><rect x="5" y="16" width="1" height="1" fill="#c8c8c8"/><rect x="7" y="16" width="1" height="1" fill="#c8c8c8"/><rect x="9" y="16" width="1" height="1" fill="#c8c8c8"/><rect x="11" y="16" width="1" height="1" fill="#c8c8c8"/><rect x="13" y="16" width="1" height="1" fill="#c8c8c8"/><rect x="15" y="16" width="1" height="1" fill="#c8c8c8"/><rect x="17" y="16" width="1" height="1" fill="#c8c8c8"/><rect x="6" y="17" width="1" height="1" fill="#c8c8c8"/><rect x="8" y="17" width="1" height="1" fill="#c8c8c8"/><rect x="10" y="17" width="1" height="1" fill="#c8c8c8"/><rect x="12" y="17" width="1" height="1" fill="#c8c8c8"/><rect x="14" y="17" width="1" height="1" fill="#c8c8c8"/><rect x="16" y="17" width="1" height="1" fill="#c8c8c8"/><rect x="18" y="17" width="1" height="1" fill="#c8c8c8"/><rect x="4" y="3" width="1" height="1" fill="#f00"/><rect x="4" y="16" width="1" height="1" fill="#f00"/><rect x="6" y="3" width="1" height="1" fill="#f00"/><rect x="6" y="16" width="1" height="1" fill="#f00"/><rect x="8" y="3" width="1" height="1" fill="#f00"/><rect x="8" y="16" width="1" height="1" fill="#f00"/><rect x="10" y="3" width="1" height="1" fill="#f00"/><rect x="10" y="16" width="1" height="1" fill="#f00"/><rect x="12" y="3" width="1" height="1" fill="#f00"/><rect x="12" y="16" width="1" height="1" fill="#f00"/><rect x="14" y="3" width="1" height="1" fill="#f00"/><rect x="14" y="16" width="1" height="1" fill="#f00"/><rect x="16" y="3" width="1" height="1" fill="#f00"/><rect x="16" y="16" width="1" height="1" fill="#f00"/><rect x="18" y="3" width="1" height="1" fill="#f00"/><rect x="18" y="16" width="1" height="1" fill="#f00"/><rect x="4" y="3" width="1" height="1" fill="#f00"/><rect x="19" y="3" width="1" height="1" fill="#f00"/><rect x="4" y="5" width="1" height="1" fill="#f00"/><rect x="19" y="5" width="1" height="1" fill="#f00"/><rect x="4" y="7" width="1" height="1" fill="#f00"/><rect x="19" y="7" width="1" height="1" fill="#f00"/><rect x="4" y="9" width="1" height="1" fill="#f00"/><rect x="19" y="9" width="1" height="1" fill="#f00"/><rect x="4" y="11" width="1" height="1" fill="#f00"/><rect x="19" y="11" width="1" height="1" fill="#f00"/><rect x="4" y="13" width="1" height="1" fill="#f00"/><rect x="19" y="13" width="1" height="1" fill="#f00"/><rect x="4" y="15" width="1" height="1" fill="#f00"/><rect x="19" y="15" width="1" height="1" fill="#f00"/><rect x="4" y="16" width="1" height="1" fill="#f00"/><rect x="6" y="16" width="1" height="1" fill="#f00"/><rect x="8" y="16" width="1" height="1" fill="#f00"/><rect x="10" y="16" width="1" height="1" fill="#f00"/><rect x="12" y="16" width="1" height="1" fill="#f00"/><rect x="14" y="16" width="1" height="1" fill="#f00"/><rect x="16" y="16" width="1" height="1" fill="#f00"/><rect x="18" y="16" width="1" height="1" fill="#f00"/><rect x="4" y="18" width="1" height="1" fill="#f00"/><rect x="6" y="18" width="1" height="1" fill="#f00"/><rect x="8" y="18" width="1" height="1" fill="#f00"/><rect x="10" y="18" width="1" height="1" fill="#f00"/><rect x="12" y="18" width="1" height="1" fill="#f00"/><rect x="14" y="18" width="1" height="1" fill="#f00"/><rect x="16" y="18" width="1" height="1" fill="#f00"/><rect x="18" y="18" width="1" height="1" fill="#f00"/><rect x="6" y="7" width="1" height="1" fill="#f00"/><rect x="12" y="7" width="1" height="1" fill="#f00"/><rect x="7" y="8" width="1" height="1" fill="#f00"/><rect x="11" y="8" width="1" height="1" fill="#f00"/><rect x="8" y="9" width="1" height="1" fill="#f00"/><rect x="10" y="9" width="1" height="1" fill="#f00"/><rect x="9" y="10" width="1" height="1" fill="#f00"/><rect x="9" y="10" width="1" height="1" fill="#f00"/><rect x="10" y="11" width="1" height="1" fill="#f00"/><rect x="8" y="11" width="1" height="1" fill="#f00"/><rect x="11" y="12" width="1" height="1" fill="#f00"/><rect x="7" y="12" width="1" height="1" fill="#f00"/><rect x="12" y="13" width="1" height="1" fill="#f00"/><rect x="6" y="13" width="1" height="1" fill="#f00"/><rect x="9" y="5" width="1" height="1" fill="#f00"/><rect x="9" y="7" width="1" height="1" fill="#f00"/><rect x="19" y="14" width="1" height="1" fill="#f00"/></g></svg>
<div class="b" style="left:1004px;top:53px;width:24px;height:23px;background:#f0f0f0;border:1px solid #000;box-shadow:inset 1px 1px 0 #fff,inset -1px -1px 0 #808080,inset -2px -2px 0 #808080;"></div>
<svg class="b" style="left:1004px;top:53px;" width="24" height="23" viewBox="0 0 24 23" ><g class="ce"><rect x="4" y="4" width="1" height="1" fill="#c8c8c8"/><rect x="6" y="4" width="1" height="1" fill="#c8c8c8"/><rect x="8" y="4" width="1" height="1" fill="#c8c8c8"/><rect x="10" y="4" width="1" height="1" fill="#c8c8c8"/><rect x="12" y="4" width="1" height="1" fill="#c8c8c8"/><rect x="14" y="4" width="1" height="1" fill="#c8c8c8"/><rect x="16" y="4" width="1" height="1" fill="#c8c8c8"/><rect x="18" y="4" width="1" height="1" fill="#c8c8c8"/><rect x="5" y="5" width="1" height="1" fill="#c8c8c8"/><rect x="7" y="5" width="1" height="1" fill="#c8c8c8"/><rect x="9" y="5" width="1" height="1" fill="#c8c8c8"/><rect x="11" y="5" width="1" height="1" fill="#c8c8c8"/><rect x="13" y="5" width="1" height="1" fill="#c8c8c8"/><rect x="15" y="5" width="1" height="1" fill="#c8c8c8"/><rect x="17" y="5" width="1" height="1" fill="#c8c8c8"/><rect x="19" y="5" width="1" height="1" fill="#c8c8c8"/><rect x="4" y="6" width="1" height="1" fill="#c8c8c8"/><rect x="6" y="6" width="1" height="1" fill="#c8c8c8"/><rect x="8" y="6" width="1" height="1" fill="#c8c8c8"/><rect x="10" y="6" width="1" height="1" fill="#c8c8c8"/><rect x="12" y="6" width="1" height="1" fill="#c8c8c8"/><rect x="14" y="6" width="1" height="1" fill="#c8c8c8"/><rect x="16" y="6" width="1" height="1" fill="#c8c8c8"/><rect x="18" y="6" width="1" height="1" fill="#c8c8c8"/><rect x="5" y="7" width="1" height="1" fill="#c8c8c8"/><rect x="7" y="7" width="1" height="1" fill="#c8c8c8"/><rect x="9" y="7" width="1" height="1" fill="#c8c8c8"/><rect x="11" y="7" width="1" height="1" fill="#c8c8c8"/><rect x="13" y="7" width="1" height="1" fill="#c8c8c8"/><rect x="15" y="7" width="1" height="1" fill="#c8c8c8"/><rect x="17" y="7" width="1" height="1" fill="#c8c8c8"/><rect x="19" y="7" width="1" height="1" fill="#c8c8c8"/><rect x="4" y="8" width="1" height="1" fill="#c8c8c8"/><rect x="6" y="8" width="1" height="1" fill="#c8c8c8"/><rect x="8" y="8" width="1" height="1" fill="#c8c8c8"/><rect x="10" y="8" width="1" height="1" fill="#c8c8c8"/><rect x="12" y="8" width="1" height="1" fill="#c8c8c8"/><rect x="14" y="8" width="1" height="1" fill="#c8c8c8"/><rect x="16" y="8" width="1" height="1" fill="#c8c8c8"/><rect x="18" y="8" width="1" height="1" fill="#c8c8c8"/><rect x="5" y="9" width="1" height="1" fill="#c8c8c8"/><rect x="7" y="9" width="1" height="1" fill="#c8c8c8"/><rect x="9" y="9" width="1" height="1" fill="#c8c8c8"/><rect x="11" y="9" width="1" height="1" fill="#c8c8c8"/><rect x="13" y="9" width="1" height="1" fill="#c8c8c8"/><rect x="15" y="9" width="1" height="1" fill="#c8c8c8"/><rect x="17" y="9" width="1" height="1" fill="#c8c8c8"/><rect x="19" y="9" width="1" height="1" fill="#c8c8c8"/><rect x="4" y="10" width="1" height="1" fill="#c8c8c8"/><rect x="6" y="10" width="1" height="1" fill="#c8c8c8"/><rect x="8" y="10" width="1" height="1" fill="#c8c8c8"/><rect x="10" y="10" width="1" height="1" fill="#c8c8c8"/><rect x="12" y="10" width="1" height="1" fill="#c8c8c8"/><rect x="14" y="10" width="1" height="1" fill="#c8c8c8"/><rect x="16" y="10" width="1" height="1" fill="#c8c8c8"/><rect x="18" y="10" width="1" height="1" fill="#c8c8c8"/><rect x="5" y="11" width="1" height="1" fill="#c8c8c8"/><rect x="7" y="11" width="1" height="1" fill="#c8c8c8"/><rect x="9" y="11" width="1" height="1" fill="#c8c8c8"/><rect x="11" y="11" width="1" height="1" fill="#c8c8c8"/><rect x="13" y="11" width="1" height="1" fill="#c8c8c8"/><rect x="15" y="11" width="1" height="1" fill="#c8c8c8"/><rect x="17" y="11" width="1" height="1" fill="#c8c8c8"/><rect x="19" y="11" width="1" height="1" fill="#c8c8c8"/><rect x="4" y="12" width="1" height="1" fill="#c8c8c8"/><rect x="6" y="12" width="1" height="1" fill="#c8c8c8"/><rect x="8" y="12" width="1" height="1" fill="#c8c8c8"/><rect x="10" y="12" width="1" height="1" fill="#c8c8c8"/><rect x="12" y="12" width="1" height="1" fill="#c8c8c8"/><rect x="14" y="12" width="1" height="1" fill="#c8c8c8"/><rect x="16" y="12" width="1" height="1" fill="#c8c8c8"/><rect x="18" y="12" width="1" height="1" fill="#c8c8c8"/><rect x="5" y="13" width="1" height="1" fill="#c8c8c8"/><rect x="7" y="13" width="1" height="1" fill="#c8c8c8"/><rect x="9" y="13" width="1" height="1" fill="#c8c8c8"/><rect x="11" y="13" width="1" height="1" fill="#c8c8c8"/><rect x="13" y="13" width="1" height="1" fill="#c8c8c8"/><rect x="15" y="13" width="1" height="1" fill="#c8c8c8"/><rect x="17" y="13" width="1" height="1" fill="#c8c8c8"/><rect x="19" y="13" width="1" height="1" fill="#c8c8c8"/><rect x="4" y="14" width="1" height="1" fill="#c8c8c8"/><rect x="6" y="14" width="1" height="1" fill="#c8c8c8"/><rect x="8" y="14" width="1" height="1" fill="#c8c8c8"/><rect x="10" y="14" width="1" height="1" fill="#c8c8c8"/><rect x="12" y="14" width="1" height="1" fill="#c8c8c8"/><rect x="14" y="14" width="1" height="1" fill="#c8c8c8"/><rect x="16" y="14" width="1" height="1" fill="#c8c8c8"/><rect x="18" y="14" width="1" height="1" fill="#c8c8c8"/><rect x="5" y="15" width="1" height="1" fill="#c8c8c8"/><rect x="7" y="15" width="1" height="1" fill="#c8c8c8"/><rect x="9" y="15" width="1" height="1" fill="#c8c8c8"/><rect x="11" y="15" width="1" height="1" fill="#c8c8c8"/><rect x="13" y="15" width="1" height="1" fill="#c8c8c8"/><rect x="15" y="15" width="1" height="1" fill="#c8c8c8"/><rect x="17" y="15" width="1" height="1" fill="#c8c8c8"/><rect x="19" y="15" width="1" height="1" fill="#c8c8c8"/><rect x="4" y="16" width="1" height="1" fill="#c8c8c8"/><rect x="6" y="16" width="1" height="1" fill="#c8c8c8"/><rect x="8" y="16" width="1" height="1" fill="#c8c8c8"/><rect x="10" y="16" width="1" height="1" fill="#c8c8c8"/><rect x="12" y="16" width="1" height="1" fill="#c8c8c8"/><rect x="14" y="16" width="1" height="1" fill="#c8c8c8"/><rect x="16" y="16" width="1" height="1" fill="#c8c8c8"/><rect x="18" y="16" width="1" height="1" fill="#c8c8c8"/><rect x="5" y="17" width="1" height="1" fill="#c8c8c8"/><rect x="7" y="17" width="1" height="1" fill="#c8c8c8"/><rect x="9" y="17" width="1" height="1" fill="#c8c8c8"/><rect x="11" y="17" width="1" height="1" fill="#c8c8c8"/><rect x="13" y="17" width="1" height="1" fill="#c8c8c8"/><rect x="15" y="17" width="1" height="1" fill="#c8c8c8"/><rect x="17" y="17" width="1" height="1" fill="#c8c8c8"/><rect x="19" y="17" width="1" height="1" fill="#c8c8c8"/><rect x="4" y="18" width="1" height="1" fill="#c8c8c8"/><rect x="6" y="18" width="1" height="1" fill="#c8c8c8"/><rect x="8" y="18" width="1" height="1" fill="#c8c8c8"/><rect x="10" y="18" width="1" height="1" fill="#c8c8c8"/><rect x="12" y="18" width="1" height="1" fill="#c8c8c8"/><rect x="14" y="18" width="1" height="1" fill="#c8c8c8"/><rect x="16" y="18" width="1" height="1" fill="#c8c8c8"/><rect x="18" y="18" width="1" height="1" fill="#c8c8c8"/><rect x="8" y="3" width="1" height="1" fill="#088"/><rect x="8" y="18" width="1" height="1" fill="#088"/><rect x="10" y="3" width="1" height="1" fill="#088"/><rect x="10" y="18" width="1" height="1" fill="#088"/><rect x="12" y="3" width="1" height="1" fill="#088"/><rect x="12" y="18" width="1" height="1" fill="#088"/><rect x="14" y="3" width="1" height="1" fill="#088"/><rect x="14" y="18" width="1" height="1" fill="#088"/><rect x="16" y="3" width="1" height="1" fill="#088"/><rect x="16" y="18" width="1" height="1" fill="#088"/><rect x="18" y="3" width="1" height="1" fill="#088"/><rect x="18" y="18" width="1" height="1" fill="#088"/><rect x="8" y="3" width="1" height="1" fill="#088"/><rect x="19" y="3" width="1" height="1" fill="#088"/><rect x="8" y="5" width="1" height="1" fill="#088"/><rect x="19" y="5" width="1" height="1" fill="#088"/><rect x="8" y="7" width="1" height="1" fill="#088"/><rect x="19" y="7" width="1" height="1" fill="#088"/><rect x="8" y="9" width="1" height="1" fill="#088"/><rect x="19" y="9" width="1" height="1" fill="#088"/><rect x="8" y="11" width="1" height="1" fill="#088"/><rect x="19" y="11" width="1" height="1" fill="#088"/><rect x="8" y="13" width="1" height="1" fill="#088"/><rect x="19" y="13" width="1" height="1" fill="#088"/><rect x="8" y="15" width="1" height="1" fill="#088"/><rect x="19" y="15" width="1" height="1" fill="#088"/><rect x="8" y="17" width="1" height="1" fill="#088"/><rect x="19" y="17" width="1" height="1" fill="#088"/><rect x="11" y="6" width="1" height="1" fill="#808000"/><rect x="12" y="7" width="1" height="1" fill="#808000"/><rect x="13" y="6" width="1" height="1" fill="#808000"/><rect x="14" y="7" width="1" height="1" fill="#808000"/><rect x="15" y="6" width="1" height="1" fill="#808000"/><rect x="16" y="7" width="1" height="1" fill="#808000"/><rect x="17" y="6" width="1" height="1" fill="#808000"/><rect x="11" y="7" width="1" height="1" fill="#808000"/><rect x="12" y="8" width="1" height="1" fill="#808000"/><rect x="13" y="7" width="1" height="1" fill="#808000"/><rect x="14" y="8" width="1" height="1" fill="#808000"/><rect x="15" y="7" width="1" height="1" fill="#808000"/><rect x="16" y="8" width="1" height="1" fill="#808000"/><rect x="17" y="7" width="1" height="1" fill="#808000"/><rect x="8" y="11" width="1" height="1" fill="#000"/><rect x="7" y="12" width="1" height="1" fill="#000"/><rect x="6" y="13" width="1" height="1" fill="#000"/><rect x="5" y="14" width="1" height="1" fill="#000"/><rect x="6" y="15" width="1" height="1" fill="#000"/><rect x="7" y="16" width="1" height="1" fill="#000"/><rect x="8" y="17" width="1" height="1" fill="#000"/><rect x="10" y="13" width="1" height="1" fill="#000"/><rect x="9" y="14" width="1" height="1" fill="#000"/><rect x="9" y="15" width="1" height="1" fill="#000"/><rect x="10" y="16" width="1" height="1" fill="#000"/><rect x="11" y="17" width="1" height="1" fill="#000"/><rect x="12" y="18" width="1" height="1" fill="#000"/><rect x="8" y="16" width="1" height="1" fill="#000"/><rect x="10" y="17" width="1" height="1" fill="#000"/></g></svg>
<!-- ===== elevation drawing ===== -->
<svg class="b" style="left:0;top:0;" width="1362" height="726" viewBox="0 0 1362 726"><defs>
<pattern id="brkL" x="690" y="518" width="15" height="20" patternUnits="userSpaceOnUse"><rect width="15" height="20" fill="#ff0000"/><rect x="0" y="8" width="15" height="1" fill="#fff"/><rect x="0" y="9" width="15" height="1" fill="#8e8088"/><rect x="0" y="18" width="15" height="1" fill="#fff"/><rect x="0" y="19" width="15" height="1" fill="#8e8088"/><rect x="10" y="0" width="1" height="10" fill="#fff"/><rect x="11" y="0" width="1" height="9" fill="#94868e"/><rect x="2" y="10" width="1" height="10" fill="#fff"/><rect x="3" y="10" width="1" height="9" fill="#94868e"/></pattern>
<pattern id="brkR" x="1135" y="518" width="15" height="20" patternUnits="userSpaceOnUse"><rect width="15" height="20" fill="#ff0000"/><rect x="0" y="8" width="15" height="1" fill="#fff"/><rect x="0" y="9" width="15" height="1" fill="#8e8088"/><rect x="0" y="18" width="15" height="1" fill="#fff"/><rect x="0" y="19" width="15" height="1" fill="#8e8088"/><rect x="10" y="0" width="1" height="10" fill="#fff"/><rect x="11" y="0" width="1" height="9" fill="#94868e"/><rect x="2" y="10" width="1" height="10" fill="#fff"/><rect x="3" y="10" width="1" height="9" fill="#94868e"/></pattern>
</defs>
<g class="ce">
<rect x="693" y="521" width="146" height="106" fill="url(#brkL)"/>
<rect x="1139" y="521" width="145" height="106" fill="url(#brkR)"/>
<rect x="693" y="521" width="1" height="106" fill="#f00"/>
<rect x="631" y="627" width="676" height="1" fill="#000"/>
<rect x="693.5" y="257.5" width="146" height="263" fill="#fff" stroke="#000" stroke-width="1"/>
<rect x="706.5" y="270.5" width="120" height="237" fill="#00bfff" stroke="#000" stroke-width="1"/>
<line x1="693.5" y1="257.5" x2="706.5" y2="270.5" stroke="#000" stroke-width="1" />
<line x1="839.5" y1="257.5" x2="826.5" y2="270.5" stroke="#000" stroke-width="1" />
<line x1="693.5" y1="520.5" x2="706.5" y2="507.5" stroke="#000" stroke-width="1" />
<line x1="839.5" y1="520.5" x2="826.5" y2="507.5" stroke="#000" stroke-width="1" />
<rect x="1138.5" y="257.5" width="146" height="263" fill="#fff" stroke="#000" stroke-width="1"/>
<rect x="1151.5" y="270.5" width="120" height="237" fill="#00bfff" stroke="#000" stroke-width="1"/>
<line x1="1138.5" y1="257.5" x2="1151.5" y2="270.5" stroke="#000" stroke-width="1" />
<line x1="1284.5" y1="257.5" x2="1271.5" y2="270.5" stroke="#000" stroke-width="1" />
<line x1="1138.5" y1="520.5" x2="1151.5" y2="507.5" stroke="#000" stroke-width="1" />
<line x1="1284.5" y1="520.5" x2="1271.5" y2="507.5" stroke="#000" stroke-width="1" />
<rect x="839.5" y="257.5" width="299" height="370" fill="#fff" stroke="#000" stroke-width="1"/>
<rect x="851.5" y="270.5" width="275" height="344" fill="#fff" stroke="#000" stroke-width="1"/>
<line x1="839.5" y1="257.5" x2="851.5" y2="270.5" stroke="#000" stroke-width="1" />
<line x1="1138.5" y1="257.5" x2="1126.5" y2="270.5" stroke="#000" stroke-width="1" />
<line x1="839.5" y1="627.5" x2="851.5" y2="614.5" stroke="#000" stroke-width="1" />
<line x1="1138.5" y1="627.5" x2="1126.5" y2="614.5" stroke="#000" stroke-width="1" />
<rect x="982.5" y="275.5" width="13" height="334" fill="#fff" stroke="#000" stroke-width="1"/>
<rect x="987.5" y="270.5" width="3" height="5" fill="#fff" stroke="#000" stroke-width="1"/>
<rect x="987.5" y="609.5" width="3" height="5" fill="#fff" stroke="#000" stroke-width="1"/>
<rect x="866.5" y="284.5" width="102" height="316" fill="#00bfff" stroke="#000" stroke-width="1"/>
<rect x="1010.5" y="284.5" width="101" height="316" fill="#00bfff" stroke="#000" stroke-width="1"/>
<line x1="851.5" y1="270.5" x2="866.5" y2="284.5" stroke="#000" stroke-width="1" />
<line x1="981.5" y1="271.5" x2="968.5" y2="284.5" stroke="#000" stroke-width="1" />
<line x1="851.5" y1="614.5" x2="866.5" y2="600.5" stroke="#000" stroke-width="1" />
<line x1="981.5" y1="613.5" x2="968.5" y2="600.5" stroke="#000" stroke-width="1" />
<line x1="1126.5" y1="270.5" x2="1111.5" y2="284.5" stroke="#000" stroke-width="1" />
<line x1="996.5" y1="271.5" x2="1010.5" y2="284.5" stroke="#000" stroke-width="1" />
<line x1="1126.5" y1="614.5" x2="1111.5" y2="600.5" stroke="#000" stroke-width="1" />
<line x1="996.5" y1="613.5" x2="1010.5" y2="600.5" stroke="#000" stroke-width="1" />
<rect x="972.5" y="429.5" width="9" height="34" fill="#fff" stroke="#000" stroke-width="1"/>
<rect x="980" y="429" width="2" height="35" fill="#000"/>
<rect x="972" y="462" width="10" height="2" fill="#000"/>
</g>
<rect x="955.5" y="435.5" width="20" height="5" rx="2" ry="2" fill="#fff" stroke="#000" stroke-width="1"/>
<g class="ce">
<rect x="975" y="452" width="4" height="3" fill="#000"/><rect x="976" y="455" width="2" height="4" fill="#000"/>
<polyline points="851.5,270.5 982.5,442.5 851.5,614.5" fill="none" stroke="#000" stroke-width="1" stroke-dasharray="22.6 7.55" stroke-dashoffset="2.9"/>
<polyline points="1126.5,270.5 995.5,442.5 1126.5,614.5" fill="none" stroke="#000" stroke-width="1" stroke-dasharray="22.6 7.55" stroke-dashoffset="7.4"/>
<rect x="693" y="242" width="57" height="1" fill="#404040"/>
<rect x="781" y="242" width="58" height="1" fill="#404040"/>
<path d="M696.5 239.5 L693.5 242.5 L696.5 245.5" fill="none" stroke="#404040" stroke-width="1"/>
<path d="M836.5 239.5 L839.5 242.5 L836.5 245.5" fill="none" stroke="#404040" stroke-width="1"/>
<rect x="839" y="242" width="59" height="1" fill="#f00"/>
<rect x="929" y="242" width="60" height="1" fill="#f00"/>
<path d="M842.5 239.5 L839.5 242.5 L842.5 245.5" fill="none" stroke="#f00" stroke-width="1"/>
<path d="M986.5 239.5 L989.5 242.5 L986.5 245.5" fill="none" stroke="#f00" stroke-width="1"/>
<rect x="989" y="242" width="58" height="1" fill="#f00"/>
<rect x="1078" y="242" width="61" height="1" fill="#f00"/>
<path d="M992.5 239.5 L989.5 242.5 L992.5 245.5" fill="none" stroke="#f00" stroke-width="1"/>
<path d="M1135.5 239.5 L1138.5 242.5 L1135.5 245.5" fill="none" stroke="#f00" stroke-width="1"/>
<rect x="1138" y="242" width="57" height="1" fill="#404040"/>
<rect x="1226" y="242" width="58" height="1" fill="#404040"/>
<path d="M1141.5 239.5 L1138.5 242.5 L1141.5 245.5" fill="none" stroke="#404040" stroke-width="1"/>
<path d="M1281.5 239.5 L1284.5 242.5 L1281.5 245.5" fill="none" stroke="#404040" stroke-width="1"/>
<rect x="693" y="235" width="1" height="15" fill="#404040"/>
<rect x="839" y="235" width="1" height="15" fill="#f00"/>
<rect x="989" y="235" width="1" height="15" fill="#f00"/>
<rect x="1138" y="235" width="1" height="15" fill="#404040"/>
<rect x="1284" y="235" width="1" height="15" fill="#404040"/>
<rect x="671" y="257" width="1" height="371" fill="#f00"/>
<rect x="666" y="257" width="13" height="1" fill="#f00"/>
<rect x="666" y="520" width="13" height="1" fill="#f00"/>
<path d="M669.5 260.5 L671.5 257.5 L673.5 260.5 M669.5 517.5 L671.5 520.5 L673.5 517.5 M669.5 523.5 L671.5 520.5 L673.5 523.5 M669.5 624.5 L671.5 627.5 L673.5 624.5" fill="none" stroke="#f00" stroke-width="1"/>
<rect x="658" y="382" width="28" height="13" fill="#f0f0f0"/>
<rect x="661" y="567" width="22" height="13" fill="#f0f0f0"/>
</g>
<g font-family="'Liberation Sans',Arial,sans-serif" font-size="12.5">
<text x="757.5" y="246.8" textLength="17.8" lengthAdjust="spacingAndGlyphs" fill="#404040">825</text>
<text x="905.8" y="246.8" textLength="17.5" lengthAdjust="spacingAndGlyphs" fill="#000">850</text>
<text x="1054.5" y="246.8" textLength="17.5" lengthAdjust="spacingAndGlyphs" fill="#000">850</text>
<text x="1202.5" y="246.8" textLength="17.8" lengthAdjust="spacingAndGlyphs" fill="#404040">825</text>
<text x="660.8" y="392.5" textLength="23.4" lengthAdjust="spacingAndGlyphs" fill="#00f">1490</text>
<text x="663.3" y="577.5" textLength="18.4" lengthAdjust="spacingAndGlyphs" fill="#000">610</text>
<text x="751.3" y="386" textLength="30" lengthAdjust="spacingAndGlyphs" fill="#000">FIXED</text>
<text x="1196.3" y="386" textLength="30" lengthAdjust="spacingAndGlyphs" fill="#000">FIXED</text>
<text x="906.7" y="439.8" textLength="21.6" lengthAdjust="spacingAndGlyphs" fill="#000">LDin</text>
<text x="1044.7" y="439.8" textLength="32.5" lengthAdjust="spacingAndGlyphs" fill="#000">RDiSlv</text>
<text x="909" y="638.8" textLength="97" lengthAdjust="spacingAndGlyphs" fill="#00f">Viewed from Outside</text>
</g></svg>
</body>
</html>
